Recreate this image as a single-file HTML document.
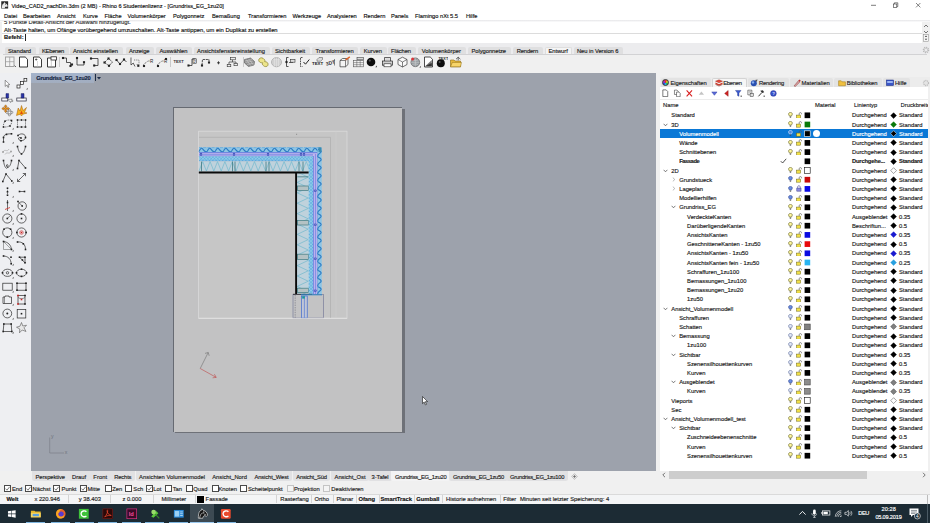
<!DOCTYPE html>
<html><head><meta charset="utf-8"><title>Rhino 6</title>
<style>
html,body{margin:0;padding:0;width:930px;height:523px;overflow:hidden;background:#f0f0f0;font-family:"Liberation Sans", sans-serif;}
#root{position:relative;width:930px;height:523px;overflow:hidden;}
#root div{position:absolute;box-sizing:border-box;}
.t{white-space:nowrap;-webkit-text-stroke:0.15px;}
</style></head><body><div id="root">
<div style="left:0px;top:0px;width:930px;height:523px;background:#f0f0f0;"></div>
<div style="left:0px;top:0px;width:930px;height:11.5px;background:#ffffff;"></div>
<div class="t" style="left:11.5px;top:0.80px;line-height:10px;font-size:5.55px;color:#111;">Video_CAD2_nachDin.3dm (2 MB) - Rhino 6 Studentenlizenz - [Grundriss_EG_1zu20]</div>
<div style="left:0px;top:11.5px;width:930px;height:9px;background:#ffffff;"></div>
<div class="t" style="left:4px;top:11.00px;line-height:10px;font-size:5.7px;color:#111;">Datei</div>
<div class="t" style="left:23px;top:11.00px;line-height:10px;font-size:5.7px;color:#111;">Bearbeiten</div>
<div class="t" style="left:57px;top:11.00px;line-height:10px;font-size:5.7px;color:#111;">Ansicht</div>
<div class="t" style="left:83px;top:11.00px;line-height:10px;font-size:5.7px;color:#111;">Kurve</div>
<div class="t" style="left:104.5px;top:11.00px;line-height:10px;font-size:5.7px;color:#111;">Fläche</div>
<div class="t" style="left:127.5px;top:11.00px;line-height:10px;font-size:5.7px;color:#111;">Volumenkörper</div>
<div class="t" style="left:173px;top:11.00px;line-height:10px;font-size:5.7px;color:#111;">Polygonnetz</div>
<div class="t" style="left:212px;top:11.00px;line-height:10px;font-size:5.7px;color:#111;">Bemaßung</div>
<div class="t" style="left:248px;top:11.00px;line-height:10px;font-size:5.7px;color:#111;">Transformieren</div>
<div class="t" style="left:292.5px;top:11.00px;line-height:10px;font-size:5.7px;color:#111;">Werkzeuge</div>
<div class="t" style="left:327px;top:11.00px;line-height:10px;font-size:5.7px;color:#111;">Analysieren</div>
<div class="t" style="left:363.5px;top:11.00px;line-height:10px;font-size:5.7px;color:#111;">Rendern</div>
<div class="t" style="left:391px;top:11.00px;line-height:10px;font-size:5.7px;color:#111;">Panels</div>
<div class="t" style="left:415px;top:11.00px;line-height:10px;font-size:5.7px;color:#111;">Flamingo nXt 5.5</div>
<div class="t" style="left:466px;top:11.00px;line-height:10px;font-size:5.7px;color:#111;">Hilfe</div>
<div style="left:0px;top:20.5px;width:930px;height:22px;background:#f0f0f0;"></div>
<div style="left:2px;top:20.8px;width:920px;height:22.1px;background:#ffffff;"></div>
<div style="left:0px;top:20.2px;width:930px;height:2.2px;background:linear-gradient(#e6e6e8,#fdfdfd);"></div>
<div class="t" style="left:4px;top:25.30px;line-height:10px;font-size:5.8px;color:#111;">Alt-Taste halten, um Ofänge vorübergehend umzuschalten. Alt-Taste antippen, um ein Duplikat zu erstellen</div>
<div class="t" style="left:4px;top:32.30px;line-height:10px;font-size:5.8px;color:#111;font-weight:bold;">Befehl:</div>
<div style="left:25.4px;top:34px;width:0.6px;height:6.6px;background:#222;"></div>
<div style="left:2px;top:21px;width:914px;height:5px;overflow:hidden;"><div class="t" style="left:2px;top:-3.6px;line-height:10px;font-size:5.8px;color:#333;">5 Punkte Detail-Ansicht der Auswahl hinzugefügt.</div></div>
<div style="left:2px;top:33px;width:920px;height:0.5px;background:#dcdcdc;"></div>
<svg style="position:absolute;left:1.2px;top:1.4px" width="7.4" height="7.8" viewBox="0 0 9 9.5"><rect x="0.3" y="0.3" width="8.4" height="8.9" fill="#2a2a2a"/><path d="M1 8.8C1 5 2 3 3.6 2.6L4 1L5 2.6C6.8 3 8 4.4 8.2 6.4L7.2 7.4L6.2 6.6C5.2 6.8 4.6 7.6 4.6 8.8Z" fill="#e8e8e8"/><circle cx="5.4" cy="4" r="0.5" fill="#111"/></svg>
<svg style="position:absolute;left:866px;top:1px" width="60" height="9" viewBox="0 0 60 9"><path d="M5 4.3H10" stroke="#444" stroke-width="0.7"/><rect x="27.4" y="3" width="3.4" height="3.6" fill="#fff" stroke="#333" stroke-width="0.6"/><path d="M28.4 3V1.8H31.8V5.6H30.8" fill="none" stroke="#333" stroke-width="0.6"/><path d="M50 2L54.4 6.4M54.4 2L50 6.4" stroke="#333" stroke-width="0.6"/></svg>
<div style="left:0px;top:42.9px;width:930px;height:11px;background:#ececee;"></div>
<div style="left:3px;top:53.7px;width:924px;height:0.6px;background:#d2d2d4;"></div>
<div style="left:4.6px;top:46.6px;width:31px;height:7.2px;background:#dfdfe0;border-radius:2px 2px 0 0;"></div>
<div class="t" style="left:8px;top:45.70px;line-height:10px;font-size:5.8px;color:#222;letter-spacing:-0.068px;">Standard</div>
<div style="left:38.6px;top:46.6px;width:30px;height:7.2px;background:#dfdfe0;border-radius:2px 2px 0 0;"></div>
<div class="t" style="left:42px;top:45.70px;line-height:10px;font-size:5.8px;color:#222;letter-spacing:-0.267px;">KEbenen</div>
<div style="left:69.6px;top:46.6px;width:53px;height:7.2px;background:#dfdfe0;border-radius:2px 2px 0 0;"></div>
<div class="t" style="left:73px;top:45.70px;line-height:10px;font-size:5.8px;color:#222;letter-spacing:-0.008px;">Ansicht einstellen</div>
<div style="left:125.6px;top:46.6px;width:28.5px;height:7.2px;background:#dfdfe0;border-radius:2px 2px 0 0;"></div>
<div class="t" style="left:129px;top:45.70px;line-height:10px;font-size:5.8px;color:#222;letter-spacing:-0.066px;">Anzeige</div>
<div style="left:156.1px;top:46.6px;width:36.0px;height:7.2px;background:#dfdfe0;border-radius:2px 2px 0 0;"></div>
<div class="t" style="left:159.5px;top:45.70px;line-height:10px;font-size:5.8px;color:#222;letter-spacing:-0.042px;">Auswählen</div>
<div style="left:193.6px;top:46.6px;width:76px;height:7.2px;background:#dfdfe0;border-radius:2px 2px 0 0;"></div>
<div class="t" style="left:197px;top:45.70px;line-height:10px;font-size:5.8px;color:#222;letter-spacing:0.024px;">Ansichtsfenstereinstellung</div>
<div style="left:271.6px;top:46.6px;width:38px;height:7.2px;background:#dfdfe0;border-radius:2px 2px 0 0;"></div>
<div class="t" style="left:275px;top:45.70px;line-height:10px;font-size:5.8px;color:#222;letter-spacing:-0.025px;">Sichtbarkeit</div>
<div style="left:312.1px;top:46.6px;width:46.19999999999999px;height:7.2px;background:#dfdfe0;border-radius:2px 2px 0 0;"></div>
<div class="t" style="left:315.5px;top:45.70px;line-height:10px;font-size:5.8px;color:#222;letter-spacing:-0.065px;">Transformieren</div>
<div style="left:360.3px;top:46.6px;width:26.30000000000001px;height:7.2px;background:#dfdfe0;border-radius:2px 2px 0 0;"></div>
<div class="t" style="left:363.7px;top:45.70px;line-height:10px;font-size:5.8px;color:#222;letter-spacing:-0.013px;">Kurven</div>
<div style="left:387.6px;top:46.6px;width:28px;height:7.2px;background:#dfdfe0;border-radius:2px 2px 0 0;"></div>
<div class="t" style="left:391px;top:45.70px;line-height:10px;font-size:5.8px;color:#222;letter-spacing:-0.091px;">Flächen</div>
<div style="left:418.3px;top:46.6px;width:47.30000000000001px;height:7.2px;background:#dfdfe0;border-radius:2px 2px 0 0;"></div>
<div class="t" style="left:421.7px;top:45.70px;line-height:10px;font-size:5.8px;color:#222;letter-spacing:0.022px;">Volumenkörper</div>
<div style="left:468.1px;top:46.6px;width:42.5px;height:7.2px;background:#dfdfe0;border-radius:2px 2px 0 0;"></div>
<div class="t" style="left:471.5px;top:45.70px;line-height:10px;font-size:5.8px;color:#222;letter-spacing:-0.054px;">Polygonnetze</div>
<div style="left:513.3000000000001px;top:46.6px;width:29.299999999999955px;height:7.2px;background:#dfdfe0;border-radius:2px 2px 0 0;"></div>
<div class="t" style="left:516.7px;top:45.70px;line-height:10px;font-size:5.8px;color:#222;letter-spacing:-0.136px;">Rendern</div>
<div style="left:545.1px;top:46.6px;width:27.200000000000045px;height:7.2px;background:#f4f4f4;border-radius:2px 2px 0 0;border:0.5px solid #dedede;border-bottom:none;"></div>
<div class="t" style="left:548.5px;top:45.70px;line-height:10px;font-size:5.8px;color:#222;letter-spacing:-0.066px;">Entwurf</div>
<div style="left:573.6px;top:46.6px;width:49.5px;height:7.2px;background:#dfdfe0;border-radius:2px 2px 0 0;"></div>
<div class="t" style="left:577px;top:45.70px;line-height:10px;font-size:5.8px;color:#222;letter-spacing:-0.066px;">Neu in Version 6</div>
<svg style="position:absolute;left:921.5px;top:45.6px" width="8" height="8" viewBox="0 0 8 8"><circle cx="4" cy="4" r="2.6" fill="none" stroke="#b8b8b8" stroke-width="1.3" stroke-dasharray="1.2 0.8"/><circle cx="4" cy="4" r="1.8" fill="none" stroke="#c4c4c4" stroke-width="0.8"/></svg>
<svg style="position:absolute;left:919.5px;top:21.5px" width="12" height="21" viewBox="0 0 12 21"><path d="M4 5 L6 3 L8 5 M4 9 L6 11 L8 9" fill="none" stroke="#555" stroke-width="0.8"/><rect x="3.6" y="12.4" width="4.8" height="7" fill="#f6f6f6" stroke="#888" stroke-width="0.5"/><path d="M4.8 15 L6 13.6 L7.2 15 Z M4.8 16.8 L6 18.2 L7.2 16.8 Z" fill="#444"/></svg>
<svg style="position:absolute;left:3.50px;top:55.50px" width="13" height="12" viewBox="0 0 13 12"><rect x="1.5" y="1" width="8.5" height="9.5" fill="#f4f4f4" stroke="#9a9a9a" stroke-width="0.9"/><path d="M5.7 1V10.5M1.5 5.7H10" stroke="#9a9a9a" stroke-width="0.7"/><path d="M10.5 9.5l1.5 1.5" stroke="#444" stroke-width="0.8"/></svg>
<svg style="position:absolute;left:16.50px;top:55.50px" width="13" height="12" viewBox="0 0 13 12"><path d="M2.5 1H8.2L10.5 3.3V11H2.5Z" fill="#fff" stroke="#222" stroke-width="0.9"/></svg>
<svg style="position:absolute;left:30.50px;top:55.50px" width="13" height="12" viewBox="0 0 13 12"><path d="M2.5 1H8.2L10.5 3.3V11H2.5Z" fill="#fff" stroke="#222" stroke-width="0.9"/><path d="M4 3.5H6.4M5.2 2.3V4.7" stroke="#222" stroke-width="0.6"/><path d="M6.5 5V11" stroke="#bbb" stroke-width="0.5"/></svg>
<svg style="position:absolute;left:44.50px;top:55.50px" width="13" height="12" viewBox="0 0 13 12"><path d="M2.5 2H10.5V11H2.5Z" fill="#fff" stroke="#222" stroke-width="0.9"/><rect x="6" y="0.8" width="5.5" height="3.2" fill="#fff" stroke="#222" stroke-width="0.8"/><path d="M6.3 4V11" stroke="#999" stroke-width="0.5"/></svg>
<svg style="position:absolute;left:61.00px;top:55.50px" width="13" height="12" viewBox="0 0 13 12"><path d="M2 2H5.5V6.5H9.5V10" fill="none" stroke="#222" stroke-width="0.75"/><rect x="0.95" y="0.95" width="2.1" height="2.1" fill="#222"/><rect x="8.45" y="8.95" width="2.1" height="2.1" fill="#222"/><rect x="9.95" y="7.45" width="2.1" height="2.1" fill="#222"/></svg>
<svg style="position:absolute;left:74.00px;top:55.50px" width="13" height="12" viewBox="0 0 13 12"><path d="M3 2V9H10V6.5" fill="none" stroke="#222" stroke-width="0.75"/><rect x="1.95" y="0.95" width="2.1" height="2.1" fill="#222"/><rect x="8.95" y="5.15" width="2.1" height="2.1" fill="#222"/></svg>
<svg style="position:absolute;left:87.50px;top:55.50px" width="13" height="12" viewBox="0 0 13 12"><path d="M3 2.5H10V9.5H6.5" fill="none" stroke="#222" stroke-width="0.75"/><rect x="1.95" y="1.45" width="2.1" height="2.1" fill="#222"/><rect x="5.15" y="8.45" width="2.1" height="2.1" fill="#222"/></svg>
<svg style="position:absolute;left:101.50px;top:55.50px" width="13" height="12" viewBox="0 0 13 12"><path d="M2.5 6.5L6.5 2.5L10.5 6L7 9.8Z" fill="none" stroke="#222" stroke-width="0.75" stroke-dasharray="2.4 0.8"/><rect x="1.45" y="5.45" width="2.1" height="2.1" fill="#222"/><rect x="5.45" y="1.45" width="2.1" height="2.1" fill="#222"/><rect x="5.95" y="8.75" width="2.1" height="2.1" fill="#222"/></svg>
<svg style="position:absolute;left:114.50px;top:55.50px" width="13" height="12" viewBox="0 0 13 12"><path d="M1.5 4L5 8L9 3.5L11.5 6" fill="none" stroke="#222" stroke-width="0.75"/><rect x="0.44999999999999996" y="2.95" width="2.1" height="2.1" fill="#222"/><rect x="3.95" y="6.95" width="2.1" height="2.1" fill="#222"/><rect x="7.95" y="2.45" width="2.1" height="2.1" fill="#222"/></svg>
<svg style="position:absolute;left:128.00px;top:55.50px" width="13" height="12" viewBox="0 0 13 12"><path d="M3 1.5V9L5.2 7L7 10.5" fill="#fff" stroke="#222" stroke-width="0.7"/><path d="M6 4H11V8.5H8.5" fill="none" stroke="#555" stroke-width="0.7" stroke-dasharray="1 0.8"/><rect x="9.25" y="8.75" width="2.1" height="2.1" fill="#222"/></svg>
<svg style="position:absolute;left:141.50px;top:55.50px" width="13" height="12" viewBox="0 0 13 12"><path d="M1.5 8.5L6 5H8" fill="none" stroke="#333" stroke-width="0.7" stroke-dasharray="1.2 0.8"/><text x="8" y="7" font-size="4.5" font-family="Liberation Sans,sans-serif" fill="#222">R</text><rect x="0.95" y="8.95" width="2.1" height="2.1" fill="#222"/></svg>
<svg style="position:absolute;left:155.50px;top:55.50px" width="13" height="12" viewBox="0 0 13 12"><path d="M1.5 8.5L6 5H8" fill="none" stroke="#333" stroke-width="0.7" stroke-dasharray="1.2 0.8"/><text x="8" y="7" font-size="4.5" font-family="Liberation Sans,sans-serif" fill="#222">R</text><rect x="0.95" y="8.95" width="2.1" height="2.1" fill="#222"/><rect x="8.95" y="1.95" width="2.1" height="2.1" fill="#222"/></svg>
<svg style="position:absolute;left:171.50px;top:55.50px" width="13" height="12" viewBox="0 0 13 12"><text x="1.5" y="7.2" font-size="4" font-weight="bold" font-family="Liberation Sans,sans-serif" fill="#333">TEXT</text></svg>
<svg style="position:absolute;left:185.50px;top:55.50px" width="13" height="12" viewBox="0 0 13 12"><path d="M3 9.5H6V3H9.5" fill="none" stroke="#222" stroke-width="0.75"/><text x="7.6" y="6.8" font-size="4.2" font-family="Liberation Sans,sans-serif" fill="#222">2</text><rect x="7" y="2.8" width="3.6" height="4.6" fill="none" stroke="#222" stroke-width="0.5"/><rect x="1.45" y="8.45" width="2.1" height="2.1" fill="#222"/></svg>
<svg style="position:absolute;left:198.50px;top:55.50px" width="13" height="12" viewBox="0 0 13 12"><path d="M3 9L3.5 3.5H10V6" fill="none" stroke="#222" stroke-width="0.75" stroke-dasharray="2.2 0.7"/><rect x="1.95" y="8.45" width="2.1" height="2.1" fill="#222"/><rect x="8.95" y="5.45" width="2.1" height="2.1" fill="#222"/></svg>
<svg style="position:absolute;left:211.50px;top:55.50px" width="13" height="12" viewBox="0 0 13 12"><path d="M5 6.8H8M6.5 5.3V8.3" stroke="#222" stroke-width="0.8"/></svg>
<svg style="position:absolute;left:225.50px;top:55.50px" width="13" height="12" viewBox="0 0 13 12"><path d="M6.5 3.5V6H3V9M6.5 6H10V8" fill="none" stroke="#333" stroke-width="0.7"/><rect x="4.5" y="1.5" width="5" height="2.3" fill="#eee" stroke="#333" stroke-width="0.6"/><rect x="1.2" y="8.5" width="3.6" height="2.2" fill="#eee" stroke="#333" stroke-width="0.6"/><rect x="8" y="7.5" width="3.6" height="2.2" fill="#eee" stroke="#333" stroke-width="0.6"/></svg>
<svg style="position:absolute;left:242.50px;top:55.50px" width="13" height="12" viewBox="0 0 13 12"><path d="M1.5 3.5L7.5 2L11.5 5.5L11 9L5.5 10.5L1.5 7Z" fill="#8e8e8e" stroke="#555" stroke-width="0.6"/><path d="M2 5L9 3.5M2.5 6.5L10 5M4 8.5L11 7M3 3.3L8 9.8M5.5 2.7L10.5 9" stroke="#d5d5d5" stroke-width="0.5"/></svg>
<svg style="position:absolute;left:256.50px;top:55.50px" width="13" height="12" viewBox="0 0 13 12"><path d="M2 3C3.5 1.2 6 1.6 6.8 3.2C8 3.4 8.2 5 7.6 5.6C10 5.6 11.6 7.2 11 9.2C10.4 11 7.4 11 6.4 9.6C5.2 9 5.2 7.4 5.8 6.8C3.4 7.2 0.8 5.4 2 3Z" fill="#ece48a" stroke="#8a8332" stroke-width="0.7"/></svg>
<svg style="position:absolute;left:269.50px;top:55.50px" width="13" height="12" viewBox="0 0 13 12"><ellipse cx="6.5" cy="6.2" rx="5" ry="4.6" fill="#c9c9c9" stroke="#9a9a9a" stroke-width="0.6"/><path d="M2 5H11M2 7H11M3 9H10M3 3.4H10M4.5 2V10.5M6.5 1.6V10.8M8.5 2V10.5" stroke="#eee" stroke-width="0.45"/></svg>
<svg style="position:absolute;left:283.50px;top:55.50px" width="13" height="12" viewBox="0 0 13 12"><path d="M4.5 1.5H2.5V10.5H4.5" fill="none" stroke="#222" stroke-width="0.75"/><path d="M5 6.5H9" stroke="#222" stroke-width="0.7"/><rect x="6.5" y="3.5" width="4.5" height="2.7" fill="#ddd" stroke="#333" stroke-width="0.6"/><rect x="1.45" y="4.95" width="2.1" height="2.1" fill="#222"/></svg>
<svg style="position:absolute;left:297.50px;top:55.50px" width="13" height="12" viewBox="0 0 13 12"><path d="M4.5 1.5H2.5V10.5H4.5" fill="none" stroke="#222" stroke-width="0.75" stroke-dasharray="1.8 0.7"/><path d="M5.5 6L7.5 8.2L11.3 3.5" fill="none" stroke="#222" stroke-width="1"/></svg>
<svg style="position:absolute;left:311.00px;top:55.50px" width="13" height="12" viewBox="0 0 13 12"><text x="1" y="9" font-size="4.4" font-weight="bold" font-family="Liberation Sans,sans-serif" fill="#222">TEXT</text><path d="M6 3.5L8 1.5H11.5V3.5L9.5 5.2H6Z" fill="#ddd" stroke="#444" stroke-width="0.5"/></svg>
<svg style="position:absolute;left:324.50px;top:55.50px" width="13" height="12" viewBox="0 0 13 12"><text x="0.5" y="8.6" font-size="5" font-weight="bold" font-family="Liberation Sans,sans-serif" fill="#333" transform="rotate(-12 6 6)">3DT</text><path d="M9.5 3V9.5" stroke="#444" stroke-width="0.6"/></svg>
<svg style="position:absolute;left:337.50px;top:55.50px" width="13" height="12" viewBox="0 0 13 12"><path d="M2 4.5L4.5 2.5H10V8.5L7.5 10.8H2Z" fill="#f4f4f4" stroke="#333" stroke-width="0.7"/><path d="M2 4.5H7.5V10.8M7.5 4.5L10 2.5" fill="none" stroke="#333" stroke-width="0.6"/><path d="M7.5 4L11.8 0.8" stroke="#e0622a" stroke-width="1.5"/></svg>
<svg style="position:absolute;left:351.50px;top:55.50px" width="13" height="12" viewBox="0 0 13 12"><rect x="1.5" y="4.5" width="10" height="6.3" fill="#f4f4f4" stroke="#555" stroke-width="0.6"/><path d="M1.5 6.6H11.5M1.5 8.7H11.5M4.8 4.5V10.8M8.2 4.5V10.8" stroke="#555" stroke-width="0.5"/><rect x="5" y="1.6" width="6.5" height="2.2" fill="#d9d9d9" stroke="#444" stroke-width="0.6"/></svg>
<svg style="position:absolute;left:364.50px;top:55.50px" width="13" height="12" viewBox="0 0 13 12"><circle cx="6" cy="6" r="4.3" fill="#0c0c0c"/><circle cx="4.8" cy="4.6" r="1.1" fill="#555"/><path d="M10.3 11.2l1.6 0l0 -1.6z" fill="#333"/></svg>
<svg style="position:absolute;left:381.00px;top:55.50px" width="13" height="12" viewBox="0 0 13 12"><path d="M3.5 5V1.5H9.5V5" fill="#fff" stroke="#222" stroke-width="0.7"/><rect x="1.5" y="5" width="10" height="4.2" fill="#d0d0d0" stroke="#222" stroke-width="0.7"/><rect x="3" y="7.8" width="7" height="3" fill="#fff" stroke="#222" stroke-width="0.6"/><path d="M4.2 2.8H8.8M4.2 3.9H8.8" stroke="#888" stroke-width="0.4"/></svg>
<svg style="position:absolute;left:395.50px;top:55.50px" width="13" height="12" viewBox="0 0 13 12"><path d="M6.5 1.2L11 3.5V8.5L6.5 11L2 8.5V3.5Z" fill="#fafafa" stroke="#333" stroke-width="0.7"/><path d="M2 3.5L6.5 6L11 3.5M6.5 6V11" fill="none" stroke="#333" stroke-width="0.6"/></svg>
<svg style="position:absolute;left:408.50px;top:55.50px" width="13" height="12" viewBox="0 0 13 12"><circle cx="6.3" cy="6.3" r="4.4" fill="#9aa0a4" stroke="#555" stroke-width="0.6"/><path d="M2 6.3H10.6M6.3 2V10.6M3.2 3.6C5 5 7.6 5 9.4 3.6M3.2 9C5 7.6 7.6 7.6 9.4 9" fill="none" stroke="#ddd" stroke-width="0.4"/><circle cx="3.6" cy="3" r="1.5" fill="#d8363a"/><path d="M10.3 11.5l1.6 0l0 -1.6z" fill="#333"/></svg>
<svg style="position:absolute;left:421.50px;top:55.50px" width="13" height="12" viewBox="0 0 13 12"><path d="M2.5 1H8.2L10.5 3.3V11H2.5Z" fill="#fff" stroke="#222" stroke-width="0.8"/><path d="M3.2 10.3L9.8 4V10.3Z" fill="#777"/><path d="M3.2 10.3L9.8 10.3L9.8 7Z" fill="#333"/></svg>
<svg style="position:absolute;left:434.50px;top:55.50px" width="13" height="12" viewBox="0 0 13 12"><circle cx="5.8" cy="7.2" r="4" fill="#0c0c0c"/><circle cx="4.6" cy="6" r="1" fill="#555"/><text x="3.5" y="3.8" font-size="3.8" font-weight="bold" font-family="Liberation Sans,sans-serif" fill="#333">TEXT</text></svg>
<svg style="position:absolute;left:448.50px;top:55.50px" width="13" height="12" viewBox="0 0 13 12"><path d="M1.5 4H5L6 5H11.5V10.8H1.5Z" fill="#e7b93c" stroke="#8a6a14" stroke-width="0.6"/><path d="M1.5 10.8L3.3 6.4H12.5L11.5 10.8Z" fill="#f7d56a" stroke="#8a6a14" stroke-width="0.5"/><path d="M7 3.2L9.2 1.2L11.4 3.2M9.2 1.2V4.4" fill="none" stroke="#333" stroke-width="0.7"/></svg>
<div style="left:59.25px;top:56.5px;width:0.6px;height:10.5px;background:#c9c9c9;"></div>
<div style="left:170.25px;top:56.5px;width:0.6px;height:10.5px;background:#c9c9c9;"></div>
<div style="left:242.75px;top:56.5px;width:0.6px;height:10.5px;background:#c9c9c9;"></div>
<div style="left:0px;top:73px;width:31px;height:398px;background:#eeeff2;"></div>
<svg style="position:absolute;left:0.90px;top:76.50px" width="13" height="13" viewBox="0 0 13 13"><path d="M4.2 3.2V9.4L5.8 8.1L6.9 10.5L7.9 10L6.8 7.8L8.8 7.6Z" fill="#fff" stroke="#555" stroke-width="0.6"/></svg>
<svg style="position:absolute;left:14.70px;top:76.50px" width="13" height="13" viewBox="0 0 13 13"><path d="M3.5 9.5L7 6L10.5 2.8" stroke="#555" stroke-width="0.6"/><rect x="2" y="8" width="3" height="3" fill="#fff" stroke="#222" stroke-width="0.7"/><rect x="5.6" y="4.6" width="2.8" height="2.8" fill="#fff" stroke="#222" stroke-width="0.7"/><rect x="9" y="1.4" width="2.8" height="2.8" fill="#fff" stroke="#222" stroke-width="0.7"/><path d="M11 12.6l1.8 0l0 -1.8z" fill="#666"/></svg>
<svg style="position:absolute;left:0.90px;top:90.06px" width="13" height="13" viewBox="0 0 13 13"><rect x="0.8" y="8" width="6" height="3" fill="#fbfbfd" stroke="#223" stroke-width="0.7"/><path d="M5 8V3.6H7.6V8Z" fill="#2a34a8" stroke="#141a5a" stroke-width="0.5"/><path d="M7.6 9V13L8.8 12L9.8 13.6L10.6 13.1L9.7 11.6L11 11.4Z" fill="#fff" stroke="#555" stroke-width="0.5" transform="rotate(-40 8 10)"/></svg>
<svg style="position:absolute;left:14.70px;top:90.06px" width="13" height="13" viewBox="0 0 13 13"><rect x="1.8" y="8" width="9.4" height="3" fill="#fbfbfd" stroke="#223" stroke-width="0.7"/><path d="M6.2 8V3.6H9V8Z" fill="#2a34a8" stroke="#141a5a" stroke-width="0.5"/></svg>
<svg style="position:absolute;left:0.90px;top:103.62px" width="13" height="13" viewBox="0 0 13 13"><path d="M4 0L5.4 1.7H4.6V3.4H6.3V2.6L8 4L6.3 5.4V4.6H4.6V6.3H5.4L4 8L2.6 6.3H3.4V4.6H1.7V5.4L0 4L1.7 2.6V3.4H3.4V1.7H2.6Z" transform="translate(4.6 4.6) scale(0.95)" fill="#fff" stroke="#444" stroke-width="0.55"/><path d="M4 0L5.4 1.7H4.6V3.4H6.3V2.6L8 4L6.3 5.4V4.6H4.6V6.3H5.4L4 8L2.6 6.3H3.4V4.6H1.7V5.4L0 4L1.7 2.6V3.4H3.4V1.7H2.6Z" transform="translate(0.8 0.8) scale(0.95)" fill="#f29a1f" stroke="#8a4a08" stroke-width="0.5"/></svg>
<svg style="position:absolute;left:14.70px;top:103.62px" width="13" height="13" viewBox="0 0 13 13"><path d="M1.5 11.5L3.2 4L5 7L6.5 1.5L8 6.5L11.5 3.5L9.4 8.4L12 9L8 10.2L6.5 12L5 10.2Z" fill="#f6b21c" stroke="#a15a06" stroke-width="0.5"/><path d="M5 10L6.5 6.5L8 10Z" fill="#e04a10"/></svg>
<svg style="position:absolute;left:0.90px;top:117.18px" width="13" height="13" viewBox="0 0 13 13"><path d="M2.5 10C2 4 6 2 10.5 3.5C11.5 6.5 9 10.5 2.5 10Z" fill="none" stroke="#2a2a2a" stroke-width="0.7" stroke-dasharray="1 0.9"/><rect x="1.7" y="9.2" width="1.6" height="1.6" fill="#222"/><rect x="9.7" y="2.7" width="1.6" height="1.6" fill="#222"/><rect x="3.2" y="3.4000000000000004" width="1.6" height="1.6" fill="#222"/><rect x="8.2" y="8.2" width="1.6" height="1.6" fill="#222"/><path d="M11 12.6l1.8 0l0 -1.8z" fill="#666"/></svg>
<svg style="position:absolute;left:14.70px;top:117.18px" width="13" height="13" viewBox="0 0 13 13"><rect x="2.5" y="3" width="8" height="7" fill="none" stroke="#2a2a2a" stroke-width="0.7" stroke-dasharray="1 0.9"/><rect x="1.7" y="2.2" width="1.6" height="1.6" fill="#222"/><rect x="9.7" y="2.2" width="1.6" height="1.6" fill="#222"/><rect x="1.7" y="9.2" width="1.6" height="1.6" fill="#222"/><rect x="9.7" y="9.2" width="1.6" height="1.6" fill="#222"/><rect x="5.7" y="2.2" width="1.6" height="1.6" fill="#222"/><rect x="5.7" y="9.2" width="1.6" height="1.6" fill="#222"/></svg>
<svg style="position:absolute;left:0.90px;top:130.74px" width="13" height="13" viewBox="0 0 13 13"><path d="M2.5 11V7C2.5 4 4.5 2.8 10.5 2.8" fill="none" stroke="#2a2a2a" stroke-width="0.7"/><rect x="1.7" y="10.2" width="1.6" height="1.6" fill="#222"/><rect x="1.7" y="5.7" width="1.6" height="1.6" fill="#222"/><rect x="4.7" y="2.5999999999999996" width="1.6" height="1.6" fill="#222"/><rect x="9.7" y="1.9999999999999998" width="1.6" height="1.6" fill="#222"/><path d="M11 12.6l1.8 0l0 -1.8z" fill="#666"/></svg>
<svg style="position:absolute;left:14.70px;top:130.74px" width="13" height="13" viewBox="0 0 13 13"><path d="M3 4.5C6 1.5 11 3 10.5 6.5C10 10 4.5 10.5 3.5 8C3 6.6 5 6 6 7" fill="none" stroke="#2a2a2a" stroke-width="0.7"/><rect x="2.2" y="3.7" width="1.6" height="1.6" fill="#222"/><rect x="9.7" y="5.7" width="1.6" height="1.6" fill="#222"/><rect x="5.2" y="9.0" width="1.6" height="1.6" fill="#222"/><rect x="5.2" y="6.2" width="1.6" height="1.6" fill="#222"/></svg>
<svg style="position:absolute;left:0.90px;top:144.30px" width="13" height="13" viewBox="0 0 13 13"><path d="M2 8C4 4 6 9 8 5M4 10.5C6 7 8 11 10 7.5" fill="none" stroke="#aaa" stroke-width="0.7"/><rect x="1.2" y="7.2" width="1.6" height="1.6" fill="#999"/><rect x="9.2" y="6.7" width="1.6" height="1.6" fill="#999"/><path d="M11 12.6l1.8 0l0 -1.8z" fill="#666"/></svg>
<svg style="position:absolute;left:14.70px;top:144.30px" width="13" height="13" viewBox="0 0 13 13"><path d="M2.5 2.5C4.5 12 8.5 12 10.5 2.5" fill="none" stroke="#2a2a2a" stroke-width="0.7"/><rect x="1.7" y="1.7" width="1.6" height="1.6" fill="#222"/><rect x="9.7" y="1.7" width="1.6" height="1.6" fill="#222"/><rect x="5.7" y="9.2" width="1.6" height="1.6" fill="#222"/></svg>
<svg style="position:absolute;left:0.90px;top:157.86px" width="13" height="13" viewBox="0 0 13 13"><path d="M2.5 2.5C3.5 11 6.5 12 7 8C7.2 6 5 6 5.5 8C6.5 11 9.5 9 10.5 2.5" fill="none" stroke="#2a2a2a" stroke-width="0.7"/><rect x="1.7" y="1.7" width="1.6" height="1.6" fill="#222"/><rect x="9.7" y="1.7" width="1.6" height="1.6" fill="#222"/><path d="M11 12.6l1.8 0l0 -1.8z" fill="#666"/></svg>
<svg style="position:absolute;left:14.70px;top:157.86px" width="13" height="13" viewBox="0 0 13 13"><path d="M4 2.5L2.5 10.5M4 2.5L10.5 10" fill="none" stroke="#2a2a2a" stroke-width="0.7"/><rect x="3.2" y="1.7" width="1.6" height="1.6" fill="#222"/><rect x="1.7" y="9.7" width="1.6" height="1.6" fill="#222"/><rect x="9.7" y="9.2" width="1.6" height="1.6" fill="#222"/></svg>
<svg style="position:absolute;left:0.90px;top:171.42px" width="13" height="13" viewBox="0 0 13 13"><path d="M1.8 10.5L5 3L10.8 10" fill="none" stroke="#2a2a2a" stroke-width="0.7"/><rect x="1.0" y="9.7" width="1.6" height="1.6" fill="#222"/><rect x="4.2" y="2.2" width="1.6" height="1.6" fill="#222"/><rect x="10.0" y="9.2" width="1.6" height="1.6" fill="#222"/><path d="M11 12.6l1.8 0l0 -1.8z" fill="#666"/></svg>
<svg style="position:absolute;left:14.70px;top:171.42px" width="13" height="13" viewBox="0 0 13 13"><path d="M2.5 10.5L10.5 2.5" fill="none" stroke="#2a2a2a" stroke-width="0.7"/><path d="M2.5 7.8V10.5H5.2M7.8 2.5H10.5V5.2" fill="none" stroke="#2a2a2a" stroke-width="0.7"/></svg>
<svg style="position:absolute;left:0.90px;top:184.98px" width="13" height="13" viewBox="0 0 13 13"><path d="M6.5 3V10.5" fill="none" stroke="#333" stroke-width="0.7" stroke-dasharray="1.3 1"/><rect x="5.7" y="2.4000000000000004" width="1.6" height="1.6" fill="#222"/><rect x="5.7" y="6.0" width="1.6" height="1.6" fill="#222"/><rect x="5.7" y="9.399999999999999" width="1.6" height="1.6" fill="#222"/><path d="M11 12.6l1.8 0l0 -1.8z" fill="#666"/></svg>
<svg style="position:absolute;left:14.70px;top:184.98px" width="13" height="13" viewBox="0 0 13 13"><path d="M4.5 6.5H9.5" stroke="#333" stroke-width="0.7"/><rect x="3.7" y="5.7" width="1.6" height="1.6" fill="#222"/><rect x="8.7" y="5.7" width="1.6" height="1.6" fill="#222"/></svg>
<svg style="position:absolute;left:0.90px;top:198.54px" width="13" height="13" viewBox="0 0 13 13"><path d="M6.5 1V12" stroke="#333" stroke-width="0.7"/><path d="M4 10.5L9 8.5" stroke="#d0302a" stroke-width="0.8"/><rect x="5.7" y="2.7" width="1.6" height="1.6" fill="#222"/><path d="M11 12.6l1.8 0l0 -1.8z" fill="#666"/></svg>
<svg style="position:absolute;left:14.70px;top:198.54px" width="13" height="13" viewBox="0 0 13 13"><circle cx="7.2" cy="7" r="4.2" fill="none" stroke="#2a2a2a" stroke-width="0.7"/><path d="M3 2.5L7.2 7" stroke="#333" stroke-width="0.6"/><rect x="6.4" y="6.2" width="1.6" height="1.6" fill="#222"/><rect x="2.2" y="1.7" width="1.6" height="1.6" fill="#222"/></svg>
<svg style="position:absolute;left:0.90px;top:212.10px" width="13" height="13" viewBox="0 0 13 13"><circle cx="6.3" cy="6.5" r="4.6" fill="none" stroke="#2a2a2a" stroke-width="0.7"/><path d="M6.3 6.5L9.6 3.2" stroke="#333" stroke-width="0.6"/><rect x="5.5" y="5.7" width="1.6" height="1.6" fill="#222"/><path d="M11 12.6l1.8 0l0 -1.8z" fill="#666"/></svg>
<svg style="position:absolute;left:14.70px;top:212.10px" width="13" height="13" viewBox="0 0 13 13"><circle cx="6.5" cy="6.5" r="4.6" fill="none" stroke="#2a2a2a" stroke-width="0.7"/><rect x="5.7" y="5.7" width="1.6" height="1.6" fill="#222"/><rect x="5.7" y="1.0999999999999999" width="1.6" height="1.6" fill="#222"/></svg>
<svg style="position:absolute;left:0.90px;top:225.66px" width="13" height="13" viewBox="0 0 13 13"><circle cx="6.3" cy="6.5" r="4.6" fill="none" stroke="#2a2a2a" stroke-width="0.7"/><rect x="2.2" y="2.4000000000000004" width="1.6" height="1.6" fill="#222"/><rect x="8.799999999999999" y="2.4000000000000004" width="1.6" height="1.6" fill="#222"/><rect x="5.5" y="10.299999999999999" width="1.6" height="1.6" fill="#222"/><path d="M11 12.6l1.8 0l0 -1.8z" fill="#666"/></svg>
<svg style="position:absolute;left:14.70px;top:225.66px" width="13" height="13" viewBox="0 0 13 13"><circle cx="6.5" cy="6.5" r="4.6" fill="none" stroke="#2a2a2a" stroke-width="0.7"/><circle cx="6.5" cy="6.5" r="1.8" fill="none" stroke="#c33" stroke-width="0.6"/><rect x="1.0999999999999999" y="5.7" width="1.6" height="1.6" fill="#222"/><rect x="10.299999999999999" y="5.7" width="1.6" height="1.6" fill="#222"/><rect x="5.7" y="5.7" width="1.6" height="1.6" fill="#c22"/></svg>
<svg style="position:absolute;left:0.90px;top:239.22px" width="13" height="13" viewBox="0 0 13 13"><path d="M2.5 2.5L10.5 10.5H2.5Z" fill="none" stroke="#555" stroke-width="0.5"/><path d="M2.5 2.5C7 3 10 6 10.5 10.5" fill="none" stroke="#2a2a2a" stroke-width="0.7"/><rect x="1.7" y="1.7" width="1.6" height="1.6" fill="#222"/><rect x="9.7" y="9.7" width="1.6" height="1.6" fill="#222"/><path d="M11 12.6l1.8 0l0 -1.8z" fill="#666"/></svg>
<svg style="position:absolute;left:14.70px;top:239.22px" width="13" height="13" viewBox="0 0 13 13"><path d="M2.5 3C7.5 2.5 10.5 5.5 10.5 10.5" fill="none" stroke="#2a2a2a" stroke-width="0.7"/><rect x="1.7" y="2.2" width="1.6" height="1.6" fill="#222"/><rect x="9.7" y="9.7" width="1.6" height="1.6" fill="#222"/><rect x="7.500000000000001" y="4.0" width="1.6" height="1.6" fill="#222"/></svg>
<svg style="position:absolute;left:0.90px;top:252.78px" width="13" height="13" viewBox="0 0 13 13"><path d="M2.5 3C7 3.2 10 6 10.2 10.8" fill="none" stroke="#2a2a2a" stroke-width="0.7"/><rect x="1.7" y="2.2" width="1.6" height="1.6" fill="#222"/><rect x="9.2" y="3.4000000000000004" width="1.6" height="1.6" fill="#222"/><rect x="9.399999999999999" y="10.0" width="1.6" height="1.6" fill="#222"/><path d="M11 12.6l1.8 0l0 -1.8z" fill="#666"/></svg>
<svg style="position:absolute;left:14.70px;top:252.78px" width="13" height="13" viewBox="0 0 13 13"><path d="M4.5 4.2H10V9.8Z" fill="none" stroke="#2a2a2a" stroke-width="0.7"/><rect x="3.7" y="3.4000000000000004" width="1.6" height="1.6" fill="#222"/><rect x="9.2" y="3.4000000000000004" width="1.6" height="1.6" fill="#222"/><rect x="9.2" y="9.0" width="1.6" height="1.6" fill="#222"/><rect x="6.6000000000000005" y="6.2" width="1.6" height="1.6" fill="#222"/></svg>
<svg style="position:absolute;left:0.90px;top:266.34px" width="13" height="13" viewBox="0 0 13 13"><ellipse cx="6.5" cy="6.8" rx="5" ry="3.6" fill="none" stroke="#2a2a2a" stroke-width="0.7"/><circle cx="6.5" cy="6.8" r="1.2" fill="none" stroke="#2a2a2a" stroke-width="0.7"/><rect x="0.7" y="6.0" width="1.6" height="1.6" fill="#222"/><rect x="10.7" y="6.0" width="1.6" height="1.6" fill="#222"/><path d="M11 12.6l1.8 0l0 -1.8z" fill="#666"/></svg>
<svg style="position:absolute;left:14.70px;top:266.34px" width="13" height="13" viewBox="0 0 13 13"><ellipse cx="6.5" cy="6.8" rx="5" ry="3.6" fill="none" stroke="#2a2a2a" stroke-width="0.7"/><rect x="0.7" y="6.0" width="1.6" height="1.6" fill="#222"/><rect x="10.7" y="6.0" width="1.6" height="1.6" fill="#222"/><rect x="5.7" y="2.4000000000000004" width="1.6" height="1.6" fill="#222"/><rect x="5.7" y="9.6" width="1.6" height="1.6" fill="#222"/></svg>
<svg style="position:absolute;left:0.90px;top:279.90px" width="13" height="13" viewBox="0 0 13 13"><rect x="1.8" y="3.2" width="9.4" height="7" fill="none" stroke="#2a2a2a" stroke-width="0.7"/><path d="M11 12.6l1.8 0l0 -1.8z" fill="#666"/></svg>
<svg style="position:absolute;left:14.70px;top:279.90px" width="13" height="13" viewBox="0 0 13 13"><rect x="2" y="3.2" width="9" height="7" fill="none" stroke="#2a2a2a" stroke-width="0.7"/><rect x="1.2" y="2.4000000000000004" width="1.6" height="1.6" fill="#222"/><rect x="10.2" y="2.4000000000000004" width="1.6" height="1.6" fill="#222"/><rect x="1.2" y="9.399999999999999" width="1.6" height="1.6" fill="#222"/><rect x="10.2" y="9.399999999999999" width="1.6" height="1.6" fill="#222"/></svg>
<svg style="position:absolute;left:0.90px;top:293.46px" width="13" height="13" viewBox="0 0 13 13"><path d="M2 4H4V3H8V4H10.5V10.5H2Z" fill="none" stroke="#2a2a2a" stroke-width="0.7"/><path d="M3.5 4V10.5" stroke="#333" stroke-width="0.5"/><path d="M11 12.6l1.8 0l0 -1.8z" fill="#666"/></svg>
<svg style="position:absolute;left:14.70px;top:293.46px" width="13" height="13" viewBox="0 0 13 13"><rect x="3" y="2.5" width="7" height="8.5" fill="none" stroke="#2a2a2a" stroke-width="0.7"/><path d="M3 4.5C5 6 8 6 10 4.5" fill="none" stroke="#333" stroke-width="0.5"/><rect x="2.2" y="1.7" width="1.6" height="1.6" fill="#c22"/><rect x="9.2" y="1.7" width="1.6" height="1.6" fill="#222"/><rect x="2.2" y="10.2" width="1.6" height="1.6" fill="#c22"/><rect x="9.2" y="10.2" width="1.6" height="1.6" fill="#222"/><rect x="5.7" y="5.7" width="1.6" height="1.6" fill="#c22"/></svg>
<svg style="position:absolute;left:0.90px;top:307.02px" width="13" height="13" viewBox="0 0 13 13"><circle cx="6.3" cy="6.5" r="4.4" fill="none" stroke="#2a2a2a" stroke-width="0.7"/><circle cx="6.3" cy="6.5" r="1" fill="#222"/><path d="M11 12.6l1.8 0l0 -1.8z" fill="#666"/></svg>
<svg style="position:absolute;left:14.70px;top:307.02px" width="13" height="13" viewBox="0 0 13 13"><rect x="2.2" y="2.4" width="8.6" height="8.6" fill="none" stroke="#2a2a2a" stroke-width="0.7"/><rect x="5.7" y="5.9" width="1.6" height="1.6" fill="#222"/></svg>
<svg style="position:absolute;left:0.90px;top:320.58px" width="13" height="13" viewBox="0 0 13 13"><path d="M2.8 3H10.2L10.8 10.5H2.2Z" fill="none" stroke="#2a2a2a" stroke-width="0.7"/><rect x="1.9999999999999998" y="2.2" width="1.6" height="1.6" fill="#222"/><rect x="9.399999999999999" y="2.2" width="1.6" height="1.6" fill="#222"/><rect x="1.4000000000000001" y="9.7" width="1.6" height="1.6" fill="#222"/><rect x="10.0" y="9.7" width="1.6" height="1.6" fill="#222"/><path d="M11 12.6l1.8 0l0 -1.8z" fill="#666"/></svg>
<svg style="position:absolute;left:14.70px;top:320.58px" width="13" height="13" viewBox="0 0 13 13"><path d="M6.5 1.5L7.8 5L11.5 4.2L9 6.8L11 10.5L7.2 9L4.5 11.8L4.8 8L1.5 6.2L5 5.2Z" fill="#e8e8e8" stroke="#555" stroke-width="0.6"/></svg>
<div style="left:31px;top:73px;width:625px;height:397.5px;background:#9da2ac;"></div>
<div style="left:31px;top:73px;width:63px;height:9.5px;background:linear-gradient(#a5b4cc,#a2adbf);"></div>
<div class="t" style="left:36.3px;top:72.90px;line-height:10px;font-size:5.75px;color:#14233f;font-weight:bold;letter-spacing:-0.226px;">Grundriss_EG_1zu20</div>
<div style="left:95.2px;top:74.3px;width:0.6px;height:6.6px;background:#1c2c48;"></div>
<svg style="position:absolute;left:96.6px;top:76.6px" width="4" height="3" viewBox="0 0 4 3"><path d="M0 0H4L2 2.6Z" fill="#1c2c48"/></svg>
<div style="left:175px;top:108.8px;width:229.7px;height:324.3px;background:#6e7178;"></div>
<div style="left:173px;top:107px;width:229.2px;height:324.8px;background:#c2c2c3;border-left:1px solid #666a72;border-top:0.7px solid #666a72;"></div>
<svg style="position:absolute;left:170px;top:100px" width="240" height="340" viewBox="0 0 240 340"><rect x="28.599999999999994" y="31.19999999999999" width="148.4" height="187.10000000000002" fill="#c6c6c6" stroke="#dadada" stroke-width="0.8"/><path d="M29.0 37.3H160.5V218" fill="none" stroke="#aeaeae" stroke-width="0.7"/><path d="M166.0 31.5V218" fill="none" stroke="#cfcfcf" stroke-width="0.5"/><rect x="29" y="47.30000000000001" width="122" height="5" fill="#8ec5e4"/><path d="M29.0 51.6q2 -5.2 4 -2.2t4 2.2M37.1 51.6q2 -5.2 4 -2.2t4 2.2M45.2 51.6q2 -5.2 4 -2.2t4 2.2M53.3 51.6q2 -5.2 4 -2.2t4 2.2M61.4 51.6q2 -5.2 4 -2.2t4 2.2M69.5 51.6q2 -5.2 4 -2.2t4 2.2M77.6 51.6q2 -5.2 4 -2.2t4 2.2M85.7 51.6q2 -5.2 4 -2.2t4 2.2M93.8 51.6q2 -5.2 4 -2.2t4 2.2M101.9 51.6q2 -5.2 4 -2.2t4 2.2M110.0 51.6q2 -5.2 4 -2.2t4 2.2M118.1 51.6q2 -5.2 4 -2.2t4 2.2M126.2 51.6q2 -5.2 4 -2.2t4 2.2M134.3 51.6q2 -5.2 4 -2.2t4 2.2M142.4 51.6q2 -5.2 4 -2.2t4 2.2" fill="none" stroke="#2c7cc4" stroke-width="1.1"/><path d="M29.0 47.6H151" stroke="#5aa5dc" stroke-width="0.6" stroke-dasharray="3 1.2"/><rect x="29" y="52.30000000000001" width="118.5" height="4" fill="#cbbdf0"/><path d="M29.0 52.5H147.5M29.0 54.2H146M29.0 56.0H144" stroke="#3d62d8" stroke-width="0.6" fill="none"/><rect x="30.2" y="53.19999999999999" width="1.6" height="2.2" fill="none" stroke="#2038a8" stroke-width="0.5"/><rect x="63.2" y="53.19999999999999" width="1.6" height="2.2" fill="none" stroke="#2038a8" stroke-width="0.5"/><rect x="97.2" y="53.19999999999999" width="1.6" height="2.2" fill="none" stroke="#2038a8" stroke-width="0.5"/><rect x="130.2" y="53.19999999999999" width="1.6" height="2.2" fill="none" stroke="#2038a8" stroke-width="0.5"/><rect x="133.2" y="53.19999999999999" width="1.6" height="2.2" fill="none" stroke="#2038a8" stroke-width="0.5"/><rect x="29" y="56.30000000000001" width="114" height="4.8" fill="#8ecbe8"/><path d="M29.0 56.4l4.6 4.6M33.6 56.4l-4.6 4.6M32.3 56.4l4.6 4.6M36.9 56.4l-4.6 4.6M35.6 56.4l4.6 4.6M40.2 56.4l-4.6 4.6M38.9 56.4l4.6 4.6M43.5 56.4l-4.6 4.6M42.2 56.4l4.6 4.6M46.8 56.4l-4.6 4.6M45.5 56.4l4.6 4.6M50.1 56.4l-4.6 4.6M48.8 56.4l4.6 4.6M53.4 56.4l-4.6 4.6M52.1 56.4l4.6 4.6M56.7 56.4l-4.6 4.6M55.4 56.4l4.6 4.6M60.0 56.4l-4.6 4.6M58.7 56.4l4.6 4.6M63.3 56.4l-4.6 4.6M62.0 56.4l4.6 4.6M66.6 56.4l-4.6 4.6M65.3 56.4l4.6 4.6M69.9 56.4l-4.6 4.6M68.6 56.4l4.6 4.6M73.2 56.4l-4.6 4.6M71.9 56.4l4.6 4.6M76.5 56.4l-4.6 4.6M75.2 56.4l4.6 4.6M79.8 56.4l-4.6 4.6M78.5 56.4l4.6 4.6M83.1 56.4l-4.6 4.6M81.8 56.4l4.6 4.6M86.4 56.4l-4.6 4.6M85.1 56.4l4.6 4.6M89.7 56.4l-4.6 4.6M88.4 56.4l4.6 4.6M93.0 56.4l-4.6 4.6M91.7 56.4l4.6 4.6M96.3 56.4l-4.6 4.6M95.0 56.4l4.6 4.6M99.6 56.4l-4.6 4.6M98.3 56.4l4.6 4.6M102.9 56.4l-4.6 4.6M101.6 56.4l4.6 4.6M106.2 56.4l-4.6 4.6M104.9 56.4l4.6 4.6M109.5 56.4l-4.6 4.6M108.2 56.4l4.6 4.6M112.8 56.4l-4.6 4.6M111.5 56.4l4.6 4.6M116.1 56.4l-4.6 4.6M114.8 56.4l4.6 4.6M119.4 56.4l-4.6 4.6M118.1 56.4l4.6 4.6M122.7 56.4l-4.6 4.6M121.4 56.4l4.6 4.6M126.0 56.4l-4.6 4.6M124.7 56.4l4.6 4.6M129.3 56.4l-4.6 4.6M128.0 56.4l4.6 4.6M132.6 56.4l-4.6 4.6M131.3 56.4l4.6 4.6M135.9 56.4l-4.6 4.6M134.6 56.4l4.6 4.6M139.2 56.4l-4.6 4.6M137.9 56.4l4.6 4.6M142.5 56.4l-4.6 4.6" stroke="#4a9fdc" stroke-width="0.45" fill="none"/><path d="M29.0 61.1H139" stroke="#4a8fd6" stroke-width="0.5"/><rect x="29" y="61.30000000000001" width="110" height="10.3" fill="#bfd2dc"/><path d="M29.0 71.0l3.7 -9.4l3.7 9.4l3.7 -9.4l3.7 9.4l3.7 -9.4l3.7 9.4l3.7 -9.4l3.7 9.4l3.7 -9.4l3.7 9.4l3.7 -9.4l3.7 9.4l3.7 -9.4l3.7 9.4l3.7 -9.4l3.7 9.4l3.7 -9.4l3.7 9.4l3.7 -9.4l3.7 9.4l3.7 -9.4l3.7 9.4l3.7 -9.4l3.7 9.4l3.7 -9.4l3.7 9.4l3.7 -9.4l3.7 9.4l3.7 -9.4l3.7 9.4" stroke="#6cb6cc" stroke-width="0.65" fill="none"/><path d="M31.5 61.6V71.4" stroke="#3f7a82" stroke-width="0.8"/><path d="M62.5 61.6V71.4" stroke="#3f7a82" stroke-width="0.8"/><path d="M65.0 61.6V71.4" stroke="#3f7a82" stroke-width="0.8"/><path d="M96.0 61.6V71.4" stroke="#3f7a82" stroke-width="0.8"/><path d="M99.0 61.6V71.4" stroke="#3f7a82" stroke-width="0.8"/><path d="M129.0 61.6V71.4" stroke="#3f7a82" stroke-width="0.8"/><path d="M133.0 61.6V71.4" stroke="#3f7a82" stroke-width="0.8"/><rect x="127" y="72" width="12" height="122" fill="#bfd2dc"/><path d="M127.2 72.0l11 5.2l-11 5.2l11 5.2l-11 5.2l11 5.2l-11 5.2l11 5.2l-11 5.2l11 5.2l-11 5.2l11 5.2l-11 5.2l11 5.2l-11 5.2l11 5.2l-11 5.2l11 5.2l-11 5.2l11 5.2l-11 5.2l11 5.2l-11 5.2l11 5.2l-11 5.2" stroke="#6cb6cc" stroke-width="0.65" fill="none"/><path d="M127.3 76.8H138.60000000000002" stroke="#3f7a82" stroke-width="0.8"/><rect x="127.60000000000002" y="86" width="10.8" height="4.5" fill="#b4c2c4" stroke="#3f7a82" stroke-width="0.7"/><rect x="127.60000000000002" y="120.4" width="10.8" height="4.6" fill="#b4c2c4" stroke="#3f7a82" stroke-width="0.7"/><rect x="127.60000000000002" y="154.2" width="10.8" height="5.2" fill="#b4c2c4" stroke="#3f7a82" stroke-width="0.7"/><rect x="127.60000000000002" y="188.2" width="10.8" height="4.4" fill="#b4c2c4" stroke="#3f7a82" stroke-width="0.7"/><rect x="138.8" y="58" width="4.4" height="136" fill="#8ecbe8"/><path d="M138.8 58.0l4.4 4.4M143.2 58.0l-4.4 4.4M138.8 61.3l4.4 4.4M143.2 61.3l-4.4 4.4M138.8 64.6l4.4 4.4M143.2 64.6l-4.4 4.4M138.8 67.9l4.4 4.4M143.2 67.9l-4.4 4.4M138.8 71.2l4.4 4.4M143.2 71.2l-4.4 4.4M138.8 74.5l4.4 4.4M143.2 74.5l-4.4 4.4M138.8 77.8l4.4 4.4M143.2 77.8l-4.4 4.4M138.8 81.1l4.4 4.4M143.2 81.1l-4.4 4.4M138.8 84.4l4.4 4.4M143.2 84.4l-4.4 4.4M138.8 87.7l4.4 4.4M143.2 87.7l-4.4 4.4M138.8 91.0l4.4 4.4M143.2 91.0l-4.4 4.4M138.8 94.3l4.4 4.4M143.2 94.3l-4.4 4.4M138.8 97.6l4.4 4.4M143.2 97.6l-4.4 4.4M138.8 100.9l4.4 4.4M143.2 100.9l-4.4 4.4M138.8 104.2l4.4 4.4M143.2 104.2l-4.4 4.4M138.8 107.5l4.4 4.4M143.2 107.5l-4.4 4.4M138.8 110.8l4.4 4.4M143.2 110.8l-4.4 4.4M138.8 114.1l4.4 4.4M143.2 114.1l-4.4 4.4M138.8 117.4l4.4 4.4M143.2 117.4l-4.4 4.4M138.8 120.7l4.4 4.4M143.2 120.7l-4.4 4.4M138.8 124.0l4.4 4.4M143.2 124.0l-4.4 4.4M138.8 127.3l4.4 4.4M143.2 127.3l-4.4 4.4M138.8 130.6l4.4 4.4M143.2 130.6l-4.4 4.4M138.8 133.9l4.4 4.4M143.2 133.9l-4.4 4.4M138.8 137.2l4.4 4.4M143.2 137.2l-4.4 4.4M138.8 140.5l4.4 4.4M143.2 140.5l-4.4 4.4M138.8 143.8l4.4 4.4M143.2 143.8l-4.4 4.4M138.8 147.1l4.4 4.4M143.2 147.1l-4.4 4.4M138.8 150.4l4.4 4.4M143.2 150.4l-4.4 4.4M138.8 153.7l4.4 4.4M143.2 153.7l-4.4 4.4M138.8 157.0l4.4 4.4M143.2 157.0l-4.4 4.4M138.8 160.3l4.4 4.4M143.2 160.3l-4.4 4.4M138.8 163.6l4.4 4.4M143.2 163.6l-4.4 4.4M138.8 166.9l4.4 4.4M143.2 166.9l-4.4 4.4M138.8 170.2l4.4 4.4M143.2 170.2l-4.4 4.4M138.8 173.5l4.4 4.4M143.2 173.5l-4.4 4.4M138.8 176.8l4.4 4.4M143.2 176.8l-4.4 4.4M138.8 180.1l4.4 4.4M143.2 180.1l-4.4 4.4M138.8 183.4l4.4 4.4M143.2 183.4l-4.4 4.4M138.8 186.7l4.4 4.4M143.2 186.7l-4.4 4.4M138.8 190.0l4.4 4.4M143.2 190.0l-4.4 4.4" stroke="#4a9fdc" stroke-width="0.45" fill="none"/><rect x="143.2" y="54" width="4.2" height="140" fill="#cbbdf0"/><path d="M143.4 56.0V194M145.3 54.0V194M147.3 52.5V194" stroke="#3d62d8" stroke-width="0.6" fill="none"/><rect x="144.2" y="90" width="2.2" height="1.6" fill="none" stroke="#2038a8" stroke-width="0.5"/><rect x="144.2" y="124" width="2.2" height="1.6" fill="none" stroke="#2038a8" stroke-width="0.5"/><rect x="144.2" y="158" width="2.2" height="1.6" fill="none" stroke="#2038a8" stroke-width="0.5"/><rect x="144.2" y="190" width="2.2" height="1.6" fill="none" stroke="#2038a8" stroke-width="0.5"/><rect x="147.5" y="48" width="4.3" height="146" fill="#8ec5e4"/><path d="M148.0 49.0q5 2 2 4t-2 4M148.0 57.1q5 2 2 4t-2 4M148.0 65.2q5 2 2 4t-2 4M148.0 73.3q5 2 2 4t-2 4M148.0 81.4q5 2 2 4t-2 4M148.0 89.5q5 2 2 4t-2 4M148.0 97.6q5 2 2 4t-2 4M148.0 105.7q5 2 2 4t-2 4M148.0 113.8q5 2 2 4t-2 4M148.0 121.9q5 2 2 4t-2 4M148.0 130.0q5 2 2 4t-2 4M148.0 138.1q5 2 2 4t-2 4M148.0 146.2q5 2 2 4t-2 4M148.0 154.3q5 2 2 4t-2 4M148.0 162.4q5 2 2 4t-2 4M148.0 170.5q5 2 2 4t-2 4M148.0 178.6q5 2 2 4t-2 4M148.0 186.7q5 2 2 4t-2 4" fill="none" stroke="#2c7cc4" stroke-width="1.1"/><rect x="148.5" y="47.30000000000001" width="3" height="4.6" fill="#3a8ab0"/><path d="M28.8 72.5H138.60000000000002M126.1 72.5V194" fill="none" stroke="#0a0a0a" stroke-width="1.9"/><rect x="123" y="194.5" width="30.5" height="23.5" fill="#c3c3c4" stroke="#5a5f88" stroke-width="0.5"/><path d="M123.0 194.3H142" stroke="#222" stroke-width="0.8"/><path d="M125.2 195.0V218" stroke="#445" stroke-width="0.4" stroke-dasharray="1.4 1"/><rect x="131.60000000000002" y="196" width="5.6" height="22" fill="#c0c6d6" stroke="#2a5ad0" stroke-width="0.6"/><path d="M134.4 196.0V218" stroke="#2a5ad0" stroke-width="0.5"/><path d="M131.0 194.8H152" stroke="#2f86c8" stroke-width="1"/><rect x="132.2" y="196.2" width="2.6" height="2.4" fill="#1a9a9a"/><path d="M28.6 218.3H177" stroke="#e2e2e2" stroke-width="0.9"/><rect x="126.19999999999999" y="33.80000000000001" width="0.9" height="0.9" fill="#777"/><path d="M30.2 268.5L38.2 252.5M35.0 253.4L38.2 252.5L39.2 255.8" fill="none" stroke="#707070" stroke-width="0.6"/><path d="M30.2 268.5L46.2 277.4M42.6 277.8L46.2 277.4L44.4 274.2" fill="none" stroke="#c04848" stroke-width="0.6"/></svg>
<svg style="position:absolute;left:44px;top:430px" width="30" height="30" viewBox="0 0 30 30"><path d="M5.7 7.5V23H20" fill="none" stroke="#7c8088" stroke-width="0.7"/><text x="7" y="8.4" font-size="5.2" font-family="Liberation Sans,sans-serif" fill="#6e737c">y</text><text x="20.8" y="24" font-size="5.2" font-family="Liberation Sans,sans-serif" fill="#6e737c">x</text></svg>
<svg style="position:absolute;left:421.7px;top:396px" width="7" height="10" viewBox="0 0 7 10"><path d="M0.5 0.5V7.6L2.2 6.1L3.4 8.9L4.5 8.4L3.3 5.7L5.6 5.6Z" fill="#fff" stroke="#111" stroke-width="0.6"/></svg>
<div style="left:31.9px;top:471px;width:36.7px;height:10.4px;background:#e1e1e3;border-radius:0 0 2.5px 2.5px;"></div>
<div class="t" style="left:35.5px;top:471.60px;line-height:10px;font-size:5.8px;color:#222;letter-spacing:-0.073px;">Perspektive</div>
<div style="left:68.4px;top:471px;width:21.400000000000002px;height:10.4px;background:#e1e1e3;border-radius:0 0 2.5px 2.5px;"></div>
<div class="t" style="left:72px;top:471.60px;line-height:10px;font-size:5.8px;color:#222;letter-spacing:0.003px;">Drauf</div>
<div style="left:89.7px;top:471px;width:21.100000000000005px;height:10.4px;background:#e1e1e3;border-radius:0 0 2.5px 2.5px;"></div>
<div class="t" style="left:93.3px;top:471.60px;line-height:10px;font-size:5.8px;color:#222;letter-spacing:0.072px;">Front</div>
<div style="left:110.7px;top:471px;width:24.200000000000014px;height:10.4px;background:#e1e1e3;border-radius:0 0 2.5px 2.5px;"></div>
<div class="t" style="left:114.3px;top:471.60px;line-height:10px;font-size:5.8px;color:#222;letter-spacing:-0.175px;">Rechts</div>
<div style="left:135.5px;top:471px;width:73.2px;height:10.4px;background:#e1e1e3;border-radius:0 0 2.5px 2.5px;"></div>
<div class="t" style="left:139.1px;top:471.60px;line-height:10px;font-size:5.8px;color:#222;letter-spacing:0.025px;">Ansichten Volumenmodel</div>
<div style="left:208.6px;top:471px;width:42.000000000000014px;height:10.4px;background:#e1e1e3;border-radius:0 0 2.5px 2.5px;"></div>
<div class="t" style="left:212.2px;top:471.60px;line-height:10px;font-size:5.8px;color:#222;letter-spacing:-0.002px;">Ansicht_Nord</div>
<div style="left:250.8px;top:471px;width:41.3px;height:10.4px;background:#e1e1e3;border-radius:0 0 2.5px 2.5px;"></div>
<div class="t" style="left:254.4px;top:471.60px;line-height:10px;font-size:5.8px;color:#222;letter-spacing:-0.104px;">Ansicht_West</div>
<div style="left:292.7px;top:471px;width:37.7px;height:10.4px;background:#e1e1e3;border-radius:0 0 2.5px 2.5px;"></div>
<div class="t" style="left:296.3px;top:471.60px;line-height:10px;font-size:5.8px;color:#222;letter-spacing:-0.188px;">Ansicht_Süd</div>
<div style="left:331.0px;top:471px;width:38.09999999999998px;height:10.4px;background:#e1e1e3;border-radius:0 0 2.5px 2.5px;"></div>
<div class="t" style="left:334.6px;top:471.60px;line-height:10px;font-size:5.8px;color:#222;letter-spacing:-0.034px;">Ansicht_Ost</div>
<div style="left:367.9px;top:471px;width:24.2px;height:10.4px;background:#e1e1e3;border-radius:0 0 2.5px 2.5px;"></div>
<div class="t" style="left:371.5px;top:471.60px;line-height:10px;font-size:5.8px;color:#222;letter-spacing:-0.058px;">3-Tafel</div>
<div style="left:391.4px;top:471px;width:58.59999999999998px;height:10.4px;background:#f3f3f4;border-radius:0 0 2.5px 2.5px;"></div>
<div class="t" style="left:395px;top:471.60px;line-height:10px;font-size:5.8px;color:#222;letter-spacing:-0.243px;">Grundriss_EG_1zu20</div>
<div style="left:449.4px;top:471px;width:58.2px;height:10.4px;background:#e1e1e3;border-radius:0 0 2.5px 2.5px;"></div>
<div class="t" style="left:453px;top:471.60px;line-height:10px;font-size:5.8px;color:#222;letter-spacing:-0.265px;">Grundriss_EG_1zu50</div>
<div style="left:506.4px;top:471px;width:61.40000000000005px;height:10.4px;background:#e1e1e3;border-radius:0 0 2.5px 2.5px;"></div>
<div class="t" style="left:510px;top:471.60px;line-height:10px;font-size:5.8px;color:#222;letter-spacing:-0.253px;">Grundriss_EG_1zu100</div>
<svg style="position:absolute;left:570.5px;top:473px" width="7" height="7" viewBox="0 0 7 7"><path d="M3.5 0.6L6.4 3.5L3.5 6.4L0.6 3.5Z" fill="#e8e8e8" stroke="#999" stroke-width="0.5"/><path d="M3.5 2V5M2 3.5H5" stroke="#555" stroke-width="0.6"/></svg>
<div style="left:660px;top:77px;width:270px;height:10px;background:#ececec;"></div>
<div style="left:660px;top:87px;width:270px;height:384px;background:#ffffff;"></div>
<div style="left:660.5px;top:77.6px;width:50.4px;height:9.6px;background:#e3e3e3;border-radius:2px 2px 0 0;"></div>
<div style="left:662.3px;top:79.1px;width:7.2px;height:7.2px;background:conic-gradient(#e8302a,#f0d020,#30c040,#20b0e0,#3040e0,#c030c0,#e8302a);border-radius:50%;border:0.6px solid #333;"></div>
<div class="t" style="left:670.5px;top:77.70px;line-height:10px;font-size:5.8px;color:#222;letter-spacing:-0.051px;">Eigenschaften</div>
<div style="left:711.5px;top:77.6px;width:35.4px;height:9.6px;background:#f6f6f6;border-radius:2px 2px 0 0;border:0.5px solid #d4d4d4;border-bottom:none;"></div>
<svg style="position:absolute;left:714.6px;top:78.6px" width="8" height="8" viewBox="0 0 8 8"><path d="M0.5 2.2L4 0.8L7.5 2.2L4 3.8Z" fill="#e8483a" stroke="#8a1a10" stroke-width="0.4"/><path d="M0.5 3.6L4 5.2L7.5 3.6V5L4 6.6L0.5 5Z" fill="#d03020"/><path d="M0.5 5.4L4 7L7.5 5.4" fill="none" stroke="#7a1a10" stroke-width="0.6"/></svg>
<div class="t" style="left:723.2px;top:77.70px;line-height:10px;font-size:5.8px;color:#222;letter-spacing:-0.216px;">Ebenen</div>
<div style="left:747.5px;top:77.6px;width:41.4px;height:9.6px;background:#e3e3e3;border-radius:2px 2px 0 0;"></div>
<svg style="position:absolute;left:750.4px;top:78.6px" width="8" height="8" viewBox="0 0 8 8"><circle cx="3.8" cy="4.2" r="3" fill="#2a50b0"/><circle cx="3" cy="3.4" r="1.2" fill="#8ab0f0"/><path d="M5 1L7.6 0.4L6.6 3" fill="#555"/></svg>
<div class="t" style="left:759px;top:77.70px;line-height:10px;font-size:5.8px;color:#222;letter-spacing:-0.196px;">Rendering</div>
<div style="left:789.5px;top:77.6px;width:43.9px;height:9.6px;background:#e3e3e3;border-radius:2px 2px 0 0;"></div>
<svg style="position:absolute;left:792.9px;top:78.6px" width="8" height="8" viewBox="0 0 8 8"><path d="M1 7L5.5 1.6L7 2.8L2.4 7.4Z" fill="#d8a0a0" stroke="#8a4040" stroke-width="0.5"/><path d="M5.5 1.6L6.6 0.6L7.6 1.6L7 2.8Z" fill="#c03030"/></svg>
<div class="t" style="left:801.5px;top:77.70px;line-height:10px;font-size:5.8px;color:#222;letter-spacing:-0.006px;">Materialien</div>
<div style="left:834px;top:77.6px;width:47.9px;height:9.6px;background:#e3e3e3;border-radius:2px 2px 0 0;"></div>
<svg style="position:absolute;left:838.1px;top:78.6px" width="8" height="8" viewBox="0 0 8 8"><path d="M0.6 1.8H3.2L4 2.8H7.4V6.8H0.6Z" fill="#f0c040" stroke="#9a7410" stroke-width="0.5"/></svg>
<div class="t" style="left:846.7px;top:77.70px;line-height:10px;font-size:5.8px;color:#222;letter-spacing:-0.075px;">Bibliotheken</div>
<div style="left:882.5px;top:77.6px;width:27.9px;height:9.6px;background:#e3e3e3;border-radius:2px 2px 0 0;"></div>
<svg style="position:absolute;left:886.3px;top:78.6px" width="8" height="8" viewBox="0 0 8 8"><rect x="0.4" y="1" width="7.2" height="5.6" fill="#3a56c8" stroke="#1a2a80" stroke-width="0.5"/><path d="M1.2 2H6.8V4H1.2Z" fill="#9ab4f4"/></svg>
<div class="t" style="left:894.9px;top:77.70px;line-height:10px;font-size:5.8px;color:#222;letter-spacing:0.019px;">Hilfe</div>
<svg style="position:absolute;left:921.6px;top:78.6px" width="8" height="8" viewBox="0 0 8 8"><circle cx="4" cy="4" r="2.5" fill="#e4e4e4" stroke="#bdbdbd" stroke-width="1.3" stroke-dasharray="1.1 0.7"/></svg>
<svg style="position:absolute;left:661.30px;top:88.70px" width="8.8" height="8.8" viewBox="0 0 12 12"><path d="M2.5 1.2H7L9.2 3.4V10.4H2.5Z" fill="#fff" stroke="#222" stroke-width="0.8"/></svg>
<svg style="position:absolute;left:673.30px;top:88.70px" width="8.8" height="8.8" viewBox="0 0 12 12"><path d="M2 1.5H5.5L7 3V7.5H2Z" fill="#fff" stroke="#222" stroke-width="0.7"/><path d="M4.8 4.2H8.2L9.8 5.8V10.5H4.8Z" fill="#fff" stroke="#222" stroke-width="0.7"/></svg>
<svg style="position:absolute;left:685.30px;top:88.70px" width="8.8" height="8.8" viewBox="0 0 12 12"><path d="M2.2 2L9.6 10M9.6 2L2.2 10" stroke="#d81e1e" stroke-width="1.5"/></svg>
<svg style="position:absolute;left:697.30px;top:88.70px" width="8.8" height="8.8" viewBox="0 0 12 12"><path d="M2.4 8L6 3.4L9.6 8Z" fill="#c4c4c4"/></svg>
<svg style="position:absolute;left:709.60px;top:88.70px" width="8.8" height="8.8" viewBox="0 0 12 12"><path d="M2.4 4L6 8.6L9.6 4Z" fill="#5a6ad8" stroke="#2a3aa0" stroke-width="0.6"/></svg>
<svg style="position:absolute;left:721.60px;top:88.70px" width="8.8" height="8.8" viewBox="0 0 12 12"><path d="M8.4 2V10L3.6 6Z" fill="#d02222" stroke="#7a0a0a" stroke-width="0.5"/></svg>
<svg style="position:absolute;left:733.60px;top:88.70px" width="8.8" height="8.8" viewBox="0 0 12 12"><path d="M2 2H9.6L6.8 5.6V10L4.8 9V5.6Z" fill="#3a5ad0" stroke="#1a2a80" stroke-width="0.5"/><rect x="9" y="9" width="1.6" height="1.6" fill="#333"/></svg>
<svg style="position:absolute;left:745.70px;top:88.70px" width="8.8" height="8.8" viewBox="0 0 12 12"><path d="M2.5 1.6H8V8H2.5Z" fill="#fff" stroke="#222" stroke-width="0.7"/><path d="M3.6 3.4H7M3.6 5H7" stroke="#555" stroke-width="0.5"/><rect x="5.6" y="6" width="4.6" height="4.4" fill="#ddd" stroke="#222" stroke-width="0.6"/></svg>
<svg style="position:absolute;left:757.10px;top:88.70px" width="8.8" height="8.8" viewBox="0 0 12 12"><path d="M2 10L6.5 5" stroke="#333" stroke-width="1.3"/><path d="M4.5 2.5L8 1.8L9.8 4.4L7 5.6Z" fill="#333"/><rect x="9" y="9" width="1.6" height="1.6" fill="#333"/></svg>
<svg style="position:absolute;left:768.90px;top:88.70px" width="8.8" height="8.8" viewBox="0 0 12 12"><circle cx="6" cy="6" r="4" fill="#3850c8" stroke="#1a2a80" stroke-width="0.5"/><text x="4.4" y="8.2" font-size="6" font-weight="bold" font-family="Liberation Sans,sans-serif" fill="#dfe6ff">?</text></svg>
<div style="left:660px;top:98.6px;width:270px;height:0.5px;background:#ececec;"></div>
<div class="t" style="left:663px;top:99.80px;line-height:10px;font-size:5.8px;color:#222;">Name</div>
<div class="t" style="left:815px;top:99.80px;line-height:10px;font-size:5.8px;color:#222;">Material</div>
<div class="t" style="left:854px;top:99.80px;line-height:10px;font-size:5.8px;color:#222;">Linientyp</div>
<div class="t" style="left:900.6px;top:99.80px;line-height:10px;font-size:5.8px;color:#222;clip-path:inset(0 0 0 0);">Druckbreite</div>
<div class="t" style="left:671.3px;top:110.30px;line-height:10px;font-size:5.8px;color:#1a1a1a;">Standard</div>
<svg style="position:absolute;left:788.05px;top:112.00px" width="4.9" height="6.2" viewBox="0 0 6 7.6"><path d="M3 0.5C1.5 0.5 0.7 1.5 0.7 2.6C0.7 3.6 1.6 4.2 1.9 5H4.1C4.4 4.2 5.3 3.6 5.3 2.6C5.3 1.5 4.5 0.5 3 0.5Z" fill="#fdf7a0" stroke="#5f5a18" stroke-width="0.75"/><path d="M2 5.8H4M2.2 6.8H3.8" stroke="#444" stroke-width="0.7"/></svg>
<svg style="position:absolute;left:796.40px;top:111.80px" width="6.2" height="6.7" viewBox="0 0 7 7.6"><path d="M3.6 3.6V2C3.6 0.2 6.3 0.2 6.3 2V2.6" fill="none" stroke="#555" stroke-width="0.7"/><rect x="0.6" y="3.5" width="4.6" height="3.5" fill="#f2e24a" stroke="#6a6210" stroke-width="0.55"/></svg>
<svg style="position:absolute;left:802px;top:110px" width="11" height="11" viewBox="0 0 11 11"><rect x="2.6" y="2.45" width="5.6" height="5.7" fill="#000" stroke="none" stroke-width="0.6"/></svg>
<div class="t" style="left:852px;top:110.30px;line-height:10px;font-size:5.8px;color:#1a1a1a;">Durchgehend</div>
<svg style="position:absolute;left:889.8px;top:111.70px" width="7.2" height="7.2" viewBox="0 0 7.2 7.2"><path d="M3.6 0.7L6.5 3.6L3.6 6.5L0.7 3.6Z" fill="#000" stroke="#000" stroke-width="0.45"/></svg>
<div class="t" style="left:899px;top:110.30px;line-height:10px;font-size:5.8px;color:#1a1a1a;">Standard</div>
<div class="t" style="left:671.3px;top:119.50px;line-height:10px;font-size:5.8px;color:#1a1a1a;">3D</div>
<svg style="position:absolute;left:662.90px;top:122.50px" width="5" height="4" viewBox="0 0 5 4"><path d="M0.6 0.8L2.5 2.8L4.4 0.8" fill="none" stroke="#444" stroke-width="0.7"/></svg>
<svg style="position:absolute;left:788.05px;top:121.20px" width="4.9" height="6.2" viewBox="0 0 6 7.6"><path d="M3 0.5C1.5 0.5 0.7 1.5 0.7 2.6C0.7 3.6 1.6 4.2 1.9 5H4.1C4.4 4.2 5.3 3.6 5.3 2.6C5.3 1.5 4.5 0.5 3 0.5Z" fill="#fdf7a0" stroke="#5f5a18" stroke-width="0.75"/><path d="M2 5.8H4M2.2 6.8H3.8" stroke="#444" stroke-width="0.7"/></svg>
<svg style="position:absolute;left:796.40px;top:121.00px" width="6.2" height="6.7" viewBox="0 0 7 7.6"><path d="M3.6 3.6V2C3.6 0.2 6.3 0.2 6.3 2V2.6" fill="none" stroke="#555" stroke-width="0.7"/><rect x="0.6" y="3.5" width="4.6" height="3.5" fill="#f2e24a" stroke="#6a6210" stroke-width="0.55"/></svg>
<svg style="position:absolute;left:802px;top:119px" width="11" height="11" viewBox="0 0 11 11"><rect x="2.6" y="2.65" width="5.6" height="5.7" fill="#0a7a0a" stroke="none" stroke-width="0.6"/></svg>
<div class="t" style="left:852px;top:119.50px;line-height:10px;font-size:5.8px;color:#1a1a1a;">Durchgehend</div>
<svg style="position:absolute;left:889.8px;top:120.90px" width="7.2" height="7.2" viewBox="0 0 7.2 7.2"><path d="M3.6 0.7L6.5 3.6L3.6 6.5L0.7 3.6Z" fill="#0a7a0a" stroke="#0a7a0a" stroke-width="0.45"/></svg>
<div class="t" style="left:899px;top:119.50px;line-height:10px;font-size:5.8px;color:#1a1a1a;">Standard</div>
<div style="left:660px;top:129.2px;width:268.2px;height:8.8px;background:#0a78d6;"></div>
<div class="t" style="left:679.1999999999999px;top:128.70px;line-height:10px;font-size:5.8px;color:#fff;">Volumenmodell</div>
<svg style="position:absolute;left:788.05px;top:130.40px" width="4.9" height="6.2" viewBox="0 0 6 7.6"><path d="M3 0.5C1.5 0.5 0.7 1.5 0.7 2.6C0.7 3.6 1.6 4.2 1.9 5H4.1C4.4 4.2 5.3 3.6 5.3 2.6C5.3 1.5 4.5 0.5 3 0.5Z" fill="#4a8ae0" stroke="#e8f0ff" stroke-width="0.75"/><path d="M2 5.8H4M2.2 6.8H3.8" stroke="#444" stroke-width="0.7"/></svg>
<svg style="position:absolute;left:796.40px;top:130.20px" width="6.2" height="6.7" viewBox="0 0 7 7.6"><path d="M3.6 3.6V2C3.6 0.2 6.3 0.2 6.3 2V2.6" fill="none" stroke="#555" stroke-width="0.7"/><rect x="0.6" y="3.5" width="4.6" height="3.5" fill="#f2e24a" stroke="#6a6210" stroke-width="0.55"/></svg>
<svg style="position:absolute;left:802px;top:128px" width="11" height="11" viewBox="0 0 11 11"><rect x="2.6" y="2.85" width="5.6" height="5.7" fill="#000" stroke="#fff" stroke-width="0.6"/></svg>
<div style="left:813px;top:130.1px;width:7.2px;height:7.2px;background:#fff;border-radius:50%;"></div>
<div class="t" style="left:852px;top:128.70px;line-height:10px;font-size:5.8px;color:#fff;">Durchgehend</div>
<svg style="position:absolute;left:889.8px;top:130.10px" width="7.2" height="7.2" viewBox="0 0 7.2 7.2"><path d="M3.6 0.7L6.5 3.6L3.6 6.5L0.7 3.6Z" fill="#000" stroke="#fff" stroke-width="0.45"/></svg>
<div class="t" style="left:899px;top:128.70px;line-height:10px;font-size:5.8px;color:#fff;">Standard</div>
<div class="t" style="left:679.1999999999999px;top:137.90px;line-height:10px;font-size:5.8px;color:#1a1a1a;">Wände</div>
<svg style="position:absolute;left:788.05px;top:139.60px" width="4.9" height="6.2" viewBox="0 0 6 7.6"><path d="M3 0.5C1.5 0.5 0.7 1.5 0.7 2.6C0.7 3.6 1.6 4.2 1.9 5H4.1C4.4 4.2 5.3 3.6 5.3 2.6C5.3 1.5 4.5 0.5 3 0.5Z" fill="#fdf7a0" stroke="#5f5a18" stroke-width="0.75"/><path d="M2 5.8H4M2.2 6.8H3.8" stroke="#444" stroke-width="0.7"/></svg>
<svg style="position:absolute;left:796.40px;top:139.40px" width="6.2" height="6.7" viewBox="0 0 7 7.6"><path d="M3.6 3.6V2C3.6 0.2 6.3 0.2 6.3 2V2.6" fill="none" stroke="#555" stroke-width="0.7"/><rect x="0.6" y="3.5" width="4.6" height="3.5" fill="#f2e24a" stroke="#6a6210" stroke-width="0.55"/></svg>
<svg style="position:absolute;left:802px;top:137px" width="11" height="11" viewBox="0 0 11 11"><rect x="2.6" y="3.05" width="5.6" height="5.7" fill="#000" stroke="none" stroke-width="0.6"/></svg>
<div class="t" style="left:852px;top:137.90px;line-height:10px;font-size:5.8px;color:#1a1a1a;">Durchgehend</div>
<svg style="position:absolute;left:889.8px;top:139.30px" width="7.2" height="7.2" viewBox="0 0 7.2 7.2"><path d="M3.6 0.7L6.5 3.6L3.6 6.5L0.7 3.6Z" fill="#000" stroke="#000" stroke-width="0.45"/></svg>
<div class="t" style="left:899px;top:137.90px;line-height:10px;font-size:5.8px;color:#1a1a1a;">Standard</div>
<div class="t" style="left:679.1999999999999px;top:147.10px;line-height:10px;font-size:5.8px;color:#1a1a1a;">Schnittebenen</div>
<svg style="position:absolute;left:788.05px;top:148.80px" width="4.9" height="6.2" viewBox="0 0 6 7.6"><path d="M3 0.5C1.5 0.5 0.7 1.5 0.7 2.6C0.7 3.6 1.6 4.2 1.9 5H4.1C4.4 4.2 5.3 3.6 5.3 2.6C5.3 1.5 4.5 0.5 3 0.5Z" fill="#fdf7a0" stroke="#5f5a18" stroke-width="0.75"/><path d="M2 5.8H4M2.2 6.8H3.8" stroke="#444" stroke-width="0.7"/></svg>
<svg style="position:absolute;left:796.40px;top:148.60px" width="6.2" height="6.7" viewBox="0 0 7 7.6"><path d="M3.6 3.6V2C3.6 0.2 6.3 0.2 6.3 2V2.6" fill="none" stroke="#555" stroke-width="0.7"/><rect x="0.6" y="3.5" width="4.6" height="3.5" fill="#f2e24a" stroke="#6a6210" stroke-width="0.55"/></svg>
<svg style="position:absolute;left:802px;top:147px" width="11" height="11" viewBox="0 0 11 11"><rect x="2.6" y="2.25" width="5.6" height="5.7" fill="#000" stroke="none" stroke-width="0.6"/></svg>
<div class="t" style="left:852px;top:147.10px;line-height:10px;font-size:5.8px;color:#1a1a1a;">Durchgehend</div>
<svg style="position:absolute;left:889.8px;top:148.50px" width="7.2" height="7.2" viewBox="0 0 7.2 7.2"><path d="M3.6 0.7L6.5 3.6L3.6 6.5L0.7 3.6Z" fill="#000" stroke="#000" stroke-width="0.45"/></svg>
<div class="t" style="left:899px;top:147.10px;line-height:10px;font-size:5.8px;color:#1a1a1a;">Standard</div>
<div class="t" style="left:679.1999999999999px;top:156.30px;line-height:10px;font-size:5.8px;color:#1a1a1a;font-weight:bold;letter-spacing:-0.445px;">Fassade</div>
<svg style="position:absolute;left:779.5px;top:158.30px" width="7" height="6" viewBox="0 0 7 6"><path d="M0.8 3.2L2.6 5L6.2 0.8" fill="none" stroke="#222" stroke-width="0.8"/></svg>
<svg style="position:absolute;left:802px;top:156px" width="11" height="11" viewBox="0 0 11 11"><rect x="2.6" y="2.45" width="5.6" height="5.7" fill="#000" stroke="none" stroke-width="0.6"/></svg>
<div class="t" style="left:852px;top:156.30px;line-height:10px;font-size:5.8px;color:#1a1a1a;font-weight:bold;letter-spacing:-0.177px;">Durchgehe...</div>
<svg style="position:absolute;left:889.8px;top:157.70px" width="7.2" height="7.2" viewBox="0 0 7.2 7.2"><path d="M3.6 0.7L6.5 3.6L3.6 6.5L0.7 3.6Z" fill="#000" stroke="#000" stroke-width="0.45"/></svg>
<div class="t" style="left:899px;top:156.30px;line-height:10px;font-size:5.8px;color:#1a1a1a;font-weight:bold;letter-spacing:-0.217px;">Standard</div>
<div class="t" style="left:671.3px;top:165.50px;line-height:10px;font-size:5.8px;color:#1a1a1a;">2D</div>
<svg style="position:absolute;left:662.90px;top:168.50px" width="5" height="4" viewBox="0 0 5 4"><path d="M0.6 0.8L2.5 2.8L4.4 0.8" fill="none" stroke="#444" stroke-width="0.7"/></svg>
<svg style="position:absolute;left:788.05px;top:167.20px" width="4.9" height="6.2" viewBox="0 0 6 7.6"><path d="M3 0.5C1.5 0.5 0.7 1.5 0.7 2.6C0.7 3.6 1.6 4.2 1.9 5H4.1C4.4 4.2 5.3 3.6 5.3 2.6C5.3 1.5 4.5 0.5 3 0.5Z" fill="#fdf7a0" stroke="#5f5a18" stroke-width="0.75"/><path d="M2 5.8H4M2.2 6.8H3.8" stroke="#444" stroke-width="0.7"/></svg>
<svg style="position:absolute;left:796.40px;top:167.00px" width="6.2" height="6.7" viewBox="0 0 7 7.6"><path d="M3.6 3.6V2C3.6 0.2 6.3 0.2 6.3 2V2.6" fill="none" stroke="#555" stroke-width="0.7"/><rect x="0.6" y="3.5" width="4.6" height="3.5" fill="#f2e24a" stroke="#6a6210" stroke-width="0.55"/></svg>
<svg style="position:absolute;left:802px;top:165px" width="11" height="11" viewBox="0 0 11 11"><rect x="2.6" y="2.65" width="5.6" height="5.7" fill="#fff" stroke="#111" stroke-width="0.6"/></svg>
<div class="t" style="left:852px;top:165.50px;line-height:10px;font-size:5.8px;color:#1a1a1a;">Durchgehend</div>
<svg style="position:absolute;left:889.8px;top:166.90px" width="7.2" height="7.2" viewBox="0 0 7.2 7.2"><path d="M3.6 0.7L6.5 3.6L3.6 6.5L0.7 3.6Z" fill="#fff" stroke="#333" stroke-width="0.45"/></svg>
<div class="t" style="left:899px;top:165.50px;line-height:10px;font-size:5.8px;color:#1a1a1a;">Standard</div>
<div class="t" style="left:679.1999999999999px;top:174.70px;line-height:10px;font-size:5.8px;color:#1a1a1a;">Grundstueck</div>
<svg style="position:absolute;left:671.80px;top:177.10px" width="4" height="5" viewBox="0 0 4 5"><path d="M0.8 0.6L2.8 2.5L0.8 4.4" fill="none" stroke="#999" stroke-width="0.7"/></svg>
<svg style="position:absolute;left:788.05px;top:176.40px" width="4.9" height="6.2" viewBox="0 0 6 7.6"><path d="M3 0.5C1.5 0.5 0.7 1.5 0.7 2.6C0.7 3.6 1.6 4.2 1.9 5H4.1C4.4 4.2 5.3 3.6 5.3 2.6C5.3 1.5 4.5 0.5 3 0.5Z" fill="#6a8fe0" stroke="#2a3f90" stroke-width="0.75"/><path d="M2 5.8H4M2.2 6.8H3.8" stroke="#444" stroke-width="0.7"/></svg>
<svg style="position:absolute;left:796.40px;top:176.20px" width="6.2" height="6.7" viewBox="0 0 7 7.6"><path d="M3.6 3.6V2C3.6 0.2 6.3 0.2 6.3 2V2.6" fill="none" stroke="#555" stroke-width="0.7"/><rect x="0.6" y="3.5" width="4.6" height="3.5" fill="#f2e24a" stroke="#6a6210" stroke-width="0.55"/></svg>
<svg style="position:absolute;left:802px;top:174px" width="11" height="11" viewBox="0 0 11 11"><rect x="2.6" y="2.85" width="5.6" height="5.7" fill="#c80a0a" stroke="none" stroke-width="0.6"/></svg>
<div class="t" style="left:852px;top:174.70px;line-height:10px;font-size:5.8px;color:#1a1a1a;">Durchgehend</div>
<svg style="position:absolute;left:889.8px;top:176.10px" width="7.2" height="7.2" viewBox="0 0 7.2 7.2"><path d="M3.6 0.7L6.5 3.6L3.6 6.5L0.7 3.6Z" fill="#000" stroke="#000" stroke-width="0.45"/></svg>
<div class="t" style="left:899px;top:174.70px;line-height:10px;font-size:5.8px;color:#1a1a1a;">Standard</div>
<div class="t" style="left:679.1999999999999px;top:183.90px;line-height:10px;font-size:5.8px;color:#1a1a1a;">Lageplan</div>
<svg style="position:absolute;left:671.80px;top:186.30px" width="4" height="5" viewBox="0 0 4 5"><path d="M0.8 0.6L2.8 2.5L0.8 4.4" fill="none" stroke="#999" stroke-width="0.7"/></svg>
<svg style="position:absolute;left:788.05px;top:185.60px" width="4.9" height="6.2" viewBox="0 0 6 7.6"><path d="M3 0.5C1.5 0.5 0.7 1.5 0.7 2.6C0.7 3.6 1.6 4.2 1.9 5H4.1C4.4 4.2 5.3 3.6 5.3 2.6C5.3 1.5 4.5 0.5 3 0.5Z" fill="#6a8fe0" stroke="#2a3f90" stroke-width="0.75"/><path d="M2 5.8H4M2.2 6.8H3.8" stroke="#444" stroke-width="0.7"/></svg>
<svg style="position:absolute;left:796.40px;top:185.40px" width="6.2" height="6.7" viewBox="0 0 7 7.6"><path d="M1.8 3.6V2.2C1.8 0.3 4.8 0.3 4.8 2.2V3.6" fill="none" stroke="#4a4a9a" stroke-width="0.7"/><rect x="0.9" y="3.5" width="4.8" height="3.5" fill="#8a8ae0" stroke="#3a3a8a" stroke-width="0.55"/></svg>
<svg style="position:absolute;left:802px;top:183px" width="11" height="11" viewBox="0 0 11 11"><rect x="2.6" y="3.05" width="5.6" height="5.7" fill="#0a0ae6" stroke="none" stroke-width="0.6"/></svg>
<div class="t" style="left:852px;top:183.90px;line-height:10px;font-size:5.8px;color:#1a1a1a;">Durchgehend</div>
<svg style="position:absolute;left:889.8px;top:185.30px" width="7.2" height="7.2" viewBox="0 0 7.2 7.2"><path d="M3.6 0.7L6.5 3.6L3.6 6.5L0.7 3.6Z" fill="#000" stroke="#000" stroke-width="0.45"/></svg>
<div class="t" style="left:899px;top:183.90px;line-height:10px;font-size:5.8px;color:#1a1a1a;">Standard</div>
<div class="t" style="left:679.1999999999999px;top:193.10px;line-height:10px;font-size:5.8px;color:#1a1a1a;">Modellierhilfen</div>
<svg style="position:absolute;left:788.05px;top:194.80px" width="4.9" height="6.2" viewBox="0 0 6 7.6"><path d="M3 0.5C1.5 0.5 0.7 1.5 0.7 2.6C0.7 3.6 1.6 4.2 1.9 5H4.1C4.4 4.2 5.3 3.6 5.3 2.6C5.3 1.5 4.5 0.5 3 0.5Z" fill="#6a8fe0" stroke="#2a3f90" stroke-width="0.75"/><path d="M2 5.8H4M2.2 6.8H3.8" stroke="#444" stroke-width="0.7"/></svg>
<svg style="position:absolute;left:796.40px;top:194.60px" width="6.2" height="6.7" viewBox="0 0 7 7.6"><path d="M3.6 3.6V2C3.6 0.2 6.3 0.2 6.3 2V2.6" fill="none" stroke="#555" stroke-width="0.7"/><rect x="0.6" y="3.5" width="4.6" height="3.5" fill="#f2e24a" stroke="#6a6210" stroke-width="0.55"/></svg>
<svg style="position:absolute;left:802px;top:193px" width="11" height="11" viewBox="0 0 11 11"><rect x="2.6" y="2.25" width="5.6" height="5.7" fill="#000" stroke="none" stroke-width="0.6"/></svg>
<div class="t" style="left:852px;top:193.10px;line-height:10px;font-size:5.8px;color:#1a1a1a;">Durchgehend</div>
<svg style="position:absolute;left:889.8px;top:194.50px" width="7.2" height="7.2" viewBox="0 0 7.2 7.2"><path d="M3.6 0.7L6.5 3.6L3.6 6.5L0.7 3.6Z" fill="#000" stroke="#000" stroke-width="0.45"/></svg>
<div class="t" style="left:899px;top:193.10px;line-height:10px;font-size:5.8px;color:#1a1a1a;">Standard</div>
<div class="t" style="left:679.1999999999999px;top:202.30px;line-height:10px;font-size:5.8px;color:#1a1a1a;">Grundriss_EG</div>
<svg style="position:absolute;left:670.80px;top:205.30px" width="5" height="4" viewBox="0 0 5 4"><path d="M0.6 0.8L2.5 2.8L4.4 0.8" fill="none" stroke="#444" stroke-width="0.7"/></svg>
<svg style="position:absolute;left:788.05px;top:204.00px" width="4.9" height="6.2" viewBox="0 0 6 7.6"><path d="M3 0.5C1.5 0.5 0.7 1.5 0.7 2.6C0.7 3.6 1.6 4.2 1.9 5H4.1C4.4 4.2 5.3 3.6 5.3 2.6C5.3 1.5 4.5 0.5 3 0.5Z" fill="#fdf7a0" stroke="#5f5a18" stroke-width="0.75"/><path d="M2 5.8H4M2.2 6.8H3.8" stroke="#444" stroke-width="0.7"/></svg>
<svg style="position:absolute;left:796.40px;top:203.80px" width="6.2" height="6.7" viewBox="0 0 7 7.6"><path d="M3.6 3.6V2C3.6 0.2 6.3 0.2 6.3 2V2.6" fill="none" stroke="#555" stroke-width="0.7"/><rect x="0.6" y="3.5" width="4.6" height="3.5" fill="#f2e24a" stroke="#6a6210" stroke-width="0.55"/></svg>
<svg style="position:absolute;left:802px;top:202px" width="11" height="11" viewBox="0 0 11 11"><rect x="2.6" y="2.45" width="5.6" height="5.7" fill="#000" stroke="none" stroke-width="0.6"/></svg>
<div class="t" style="left:852px;top:202.30px;line-height:10px;font-size:5.8px;color:#1a1a1a;">Durchgehend</div>
<svg style="position:absolute;left:889.8px;top:203.70px" width="7.2" height="7.2" viewBox="0 0 7.2 7.2"><path d="M3.6 0.7L6.5 3.6L3.6 6.5L0.7 3.6Z" fill="#000" stroke="#000" stroke-width="0.45"/></svg>
<div class="t" style="left:899px;top:202.30px;line-height:10px;font-size:5.8px;color:#1a1a1a;">Standard</div>
<div class="t" style="left:687.0999999999999px;top:211.50px;line-height:10px;font-size:5.8px;color:#1a1a1a;">VerdeckteKanten</div>
<svg style="position:absolute;left:788.05px;top:213.20px" width="4.9" height="6.2" viewBox="0 0 6 7.6"><path d="M3 0.5C1.5 0.5 0.7 1.5 0.7 2.6C0.7 3.6 1.6 4.2 1.9 5H4.1C4.4 4.2 5.3 3.6 5.3 2.6C5.3 1.5 4.5 0.5 3 0.5Z" fill="#fdf7a0" stroke="#5f5a18" stroke-width="0.75"/><path d="M2 5.8H4M2.2 6.8H3.8" stroke="#444" stroke-width="0.7"/></svg>
<svg style="position:absolute;left:796.40px;top:213.00px" width="6.2" height="6.7" viewBox="0 0 7 7.6"><path d="M3.6 3.6V2C3.6 0.2 6.3 0.2 6.3 2V2.6" fill="none" stroke="#555" stroke-width="0.7"/><rect x="0.6" y="3.5" width="4.6" height="3.5" fill="#f2e24a" stroke="#6a6210" stroke-width="0.55"/></svg>
<svg style="position:absolute;left:802px;top:211px" width="11" height="11" viewBox="0 0 11 11"><rect x="2.6" y="2.65" width="5.6" height="5.7" fill="#000" stroke="none" stroke-width="0.6"/></svg>
<div class="t" style="left:852px;top:211.50px;line-height:10px;font-size:5.8px;color:#1a1a1a;">Ausgeblendet</div>
<svg style="position:absolute;left:889.8px;top:212.90px" width="7.2" height="7.2" viewBox="0 0 7.2 7.2"><path d="M3.6 0.7L6.5 3.6L3.6 6.5L0.7 3.6Z" fill="#000" stroke="#000" stroke-width="0.45"/></svg>
<div class="t" style="left:899px;top:211.50px;line-height:10px;font-size:5.8px;color:#1a1a1a;">0.35</div>
<div class="t" style="left:687.0999999999999px;top:220.70px;line-height:10px;font-size:5.8px;color:#1a1a1a;">DarüberligendeKanten</div>
<svg style="position:absolute;left:788.05px;top:222.40px" width="4.9" height="6.2" viewBox="0 0 6 7.6"><path d="M3 0.5C1.5 0.5 0.7 1.5 0.7 2.6C0.7 3.6 1.6 4.2 1.9 5H4.1C4.4 4.2 5.3 3.6 5.3 2.6C5.3 1.5 4.5 0.5 3 0.5Z" fill="#fdf7a0" stroke="#5f5a18" stroke-width="0.75"/><path d="M2 5.8H4M2.2 6.8H3.8" stroke="#444" stroke-width="0.7"/></svg>
<svg style="position:absolute;left:796.40px;top:222.20px" width="6.2" height="6.7" viewBox="0 0 7 7.6"><path d="M3.6 3.6V2C3.6 0.2 6.3 0.2 6.3 2V2.6" fill="none" stroke="#555" stroke-width="0.7"/><rect x="0.6" y="3.5" width="4.6" height="3.5" fill="#f2e24a" stroke="#6a6210" stroke-width="0.55"/></svg>
<svg style="position:absolute;left:802px;top:220px" width="11" height="11" viewBox="0 0 11 11"><rect x="2.6" y="2.85" width="5.6" height="5.7" fill="#000" stroke="none" stroke-width="0.6"/></svg>
<div class="t" style="left:852px;top:220.70px;line-height:10px;font-size:5.8px;color:#1a1a1a;">Beschriftun...</div>
<svg style="position:absolute;left:889.8px;top:222.10px" width="7.2" height="7.2" viewBox="0 0 7.2 7.2"><path d="M3.6 0.7L6.5 3.6L3.6 6.5L0.7 3.6Z" fill="#000" stroke="#000" stroke-width="0.45"/></svg>
<div class="t" style="left:899px;top:220.70px;line-height:10px;font-size:5.8px;color:#1a1a1a;">0.5</div>
<div class="t" style="left:687.0999999999999px;top:229.90px;line-height:10px;font-size:5.8px;color:#1a1a1a;">AnsichtsKanten</div>
<svg style="position:absolute;left:788.05px;top:231.60px" width="4.9" height="6.2" viewBox="0 0 6 7.6"><path d="M3 0.5C1.5 0.5 0.7 1.5 0.7 2.6C0.7 3.6 1.6 4.2 1.9 5H4.1C4.4 4.2 5.3 3.6 5.3 2.6C5.3 1.5 4.5 0.5 3 0.5Z" fill="#fdf7a0" stroke="#5f5a18" stroke-width="0.75"/><path d="M2 5.8H4M2.2 6.8H3.8" stroke="#444" stroke-width="0.7"/></svg>
<svg style="position:absolute;left:796.40px;top:231.40px" width="6.2" height="6.7" viewBox="0 0 7 7.6"><path d="M3.6 3.6V2C3.6 0.2 6.3 0.2 6.3 2V2.6" fill="none" stroke="#555" stroke-width="0.7"/><rect x="0.6" y="3.5" width="4.6" height="3.5" fill="#f2e24a" stroke="#6a6210" stroke-width="0.55"/></svg>
<svg style="position:absolute;left:802px;top:229px" width="11" height="11" viewBox="0 0 11 11"><rect x="2.6" y="3.05" width="5.6" height="5.7" fill="#0a0ae0" stroke="none" stroke-width="0.6"/></svg>
<div class="t" style="left:852px;top:229.90px;line-height:10px;font-size:5.8px;color:#1a1a1a;">Durchgehend</div>
<svg style="position:absolute;left:889.8px;top:231.30px" width="7.2" height="7.2" viewBox="0 0 7.2 7.2"><path d="M3.6 0.7L6.5 3.6L3.6 6.5L0.7 3.6Z" fill="#1a1ad0" stroke="#1a1ad0" stroke-width="0.45"/></svg>
<div class="t" style="left:899px;top:229.90px;line-height:10px;font-size:5.8px;color:#1a1a1a;">0.35</div>
<div class="t" style="left:687.0999999999999px;top:239.10px;line-height:10px;font-size:5.8px;color:#1a1a1a;">GeschnitteneKanten - 1zu50</div>
<svg style="position:absolute;left:788.05px;top:240.80px" width="4.9" height="6.2" viewBox="0 0 6 7.6"><path d="M3 0.5C1.5 0.5 0.7 1.5 0.7 2.6C0.7 3.6 1.6 4.2 1.9 5H4.1C4.4 4.2 5.3 3.6 5.3 2.6C5.3 1.5 4.5 0.5 3 0.5Z" fill="#fdf7a0" stroke="#5f5a18" stroke-width="0.75"/><path d="M2 5.8H4M2.2 6.8H3.8" stroke="#444" stroke-width="0.7"/></svg>
<svg style="position:absolute;left:796.40px;top:240.60px" width="6.2" height="6.7" viewBox="0 0 7 7.6"><path d="M3.6 3.6V2C3.6 0.2 6.3 0.2 6.3 2V2.6" fill="none" stroke="#555" stroke-width="0.7"/><rect x="0.6" y="3.5" width="4.6" height="3.5" fill="#f2e24a" stroke="#6a6210" stroke-width="0.55"/></svg>
<svg style="position:absolute;left:802px;top:239px" width="11" height="11" viewBox="0 0 11 11"><rect x="2.6" y="2.25" width="5.6" height="5.7" fill="#e80a0a" stroke="none" stroke-width="0.6"/></svg>
<div class="t" style="left:852px;top:239.10px;line-height:10px;font-size:5.8px;color:#1a1a1a;">Durchgehend</div>
<svg style="position:absolute;left:889.8px;top:240.50px" width="7.2" height="7.2" viewBox="0 0 7.2 7.2"><path d="M3.6 0.7L6.5 3.6L3.6 6.5L0.7 3.6Z" fill="#000" stroke="#000" stroke-width="0.45"/></svg>
<div class="t" style="left:899px;top:239.10px;line-height:10px;font-size:5.8px;color:#1a1a1a;">0.5</div>
<div class="t" style="left:687.0999999999999px;top:248.30px;line-height:10px;font-size:5.8px;color:#1a1a1a;">AnsichtsKanten - 1zu50</div>
<svg style="position:absolute;left:788.05px;top:250.00px" width="4.9" height="6.2" viewBox="0 0 6 7.6"><path d="M3 0.5C1.5 0.5 0.7 1.5 0.7 2.6C0.7 3.6 1.6 4.2 1.9 5H4.1C4.4 4.2 5.3 3.6 5.3 2.6C5.3 1.5 4.5 0.5 3 0.5Z" fill="#fdf7a0" stroke="#5f5a18" stroke-width="0.75"/><path d="M2 5.8H4M2.2 6.8H3.8" stroke="#444" stroke-width="0.7"/></svg>
<svg style="position:absolute;left:796.40px;top:249.80px" width="6.2" height="6.7" viewBox="0 0 7 7.6"><path d="M3.6 3.6V2C3.6 0.2 6.3 0.2 6.3 2V2.6" fill="none" stroke="#555" stroke-width="0.7"/><rect x="0.6" y="3.5" width="4.6" height="3.5" fill="#f2e24a" stroke="#6a6210" stroke-width="0.55"/></svg>
<svg style="position:absolute;left:802px;top:248px" width="11" height="11" viewBox="0 0 11 11"><rect x="2.6" y="2.45" width="5.6" height="5.7" fill="#0a0ae0" stroke="none" stroke-width="0.6"/></svg>
<div class="t" style="left:852px;top:248.30px;line-height:10px;font-size:5.8px;color:#1a1a1a;">Durchgehend</div>
<svg style="position:absolute;left:889.8px;top:249.70px" width="7.2" height="7.2" viewBox="0 0 7.2 7.2"><path d="M3.6 0.7L6.5 3.6L3.6 6.5L0.7 3.6Z" fill="#1a1ad0" stroke="#1a1ad0" stroke-width="0.45"/></svg>
<div class="t" style="left:899px;top:248.30px;line-height:10px;font-size:5.8px;color:#1a1a1a;">0.35</div>
<div class="t" style="left:687.0999999999999px;top:257.50px;line-height:10px;font-size:5.8px;color:#1a1a1a;">AnsichtsKanten fein - 1zu50</div>
<svg style="position:absolute;left:788.05px;top:259.20px" width="4.9" height="6.2" viewBox="0 0 6 7.6"><path d="M3 0.5C1.5 0.5 0.7 1.5 0.7 2.6C0.7 3.6 1.6 4.2 1.9 5H4.1C4.4 4.2 5.3 3.6 5.3 2.6C5.3 1.5 4.5 0.5 3 0.5Z" fill="#fdf7a0" stroke="#5f5a18" stroke-width="0.75"/><path d="M2 5.8H4M2.2 6.8H3.8" stroke="#444" stroke-width="0.7"/></svg>
<svg style="position:absolute;left:796.40px;top:259.00px" width="6.2" height="6.7" viewBox="0 0 7 7.6"><path d="M3.6 3.6V2C3.6 0.2 6.3 0.2 6.3 2V2.6" fill="none" stroke="#555" stroke-width="0.7"/><rect x="0.6" y="3.5" width="4.6" height="3.5" fill="#f2e24a" stroke="#6a6210" stroke-width="0.55"/></svg>
<svg style="position:absolute;left:802px;top:257px" width="11" height="11" viewBox="0 0 11 11"><rect x="2.6" y="2.65" width="5.6" height="5.7" fill="#28b4f0" stroke="none" stroke-width="0.6"/></svg>
<div class="t" style="left:852px;top:257.50px;line-height:10px;font-size:5.8px;color:#1a1a1a;">Durchgehend</div>
<svg style="position:absolute;left:889.8px;top:258.90px" width="7.2" height="7.2" viewBox="0 0 7.2 7.2"><path d="M3.6 0.7L6.5 3.6L3.6 6.5L0.7 3.6Z" fill="#28a0e0" stroke="#28a0e0" stroke-width="0.45"/></svg>
<div class="t" style="left:899px;top:257.50px;line-height:10px;font-size:5.8px;color:#1a1a1a;">0.25</div>
<div class="t" style="left:687.0999999999999px;top:266.70px;line-height:10px;font-size:5.8px;color:#1a1a1a;">Schraffuren_1zu100</div>
<svg style="position:absolute;left:788.05px;top:268.40px" width="4.9" height="6.2" viewBox="0 0 6 7.6"><path d="M3 0.5C1.5 0.5 0.7 1.5 0.7 2.6C0.7 3.6 1.6 4.2 1.9 5H4.1C4.4 4.2 5.3 3.6 5.3 2.6C5.3 1.5 4.5 0.5 3 0.5Z" fill="#fdf7a0" stroke="#5f5a18" stroke-width="0.75"/><path d="M2 5.8H4M2.2 6.8H3.8" stroke="#444" stroke-width="0.7"/></svg>
<svg style="position:absolute;left:796.40px;top:268.20px" width="6.2" height="6.7" viewBox="0 0 7 7.6"><path d="M3.6 3.6V2C3.6 0.2 6.3 0.2 6.3 2V2.6" fill="none" stroke="#555" stroke-width="0.7"/><rect x="0.6" y="3.5" width="4.6" height="3.5" fill="#f2e24a" stroke="#6a6210" stroke-width="0.55"/></svg>
<svg style="position:absolute;left:802px;top:266px" width="11" height="11" viewBox="0 0 11 11"><rect x="2.6" y="2.85" width="5.6" height="5.7" fill="#000" stroke="none" stroke-width="0.6"/></svg>
<div class="t" style="left:852px;top:266.70px;line-height:10px;font-size:5.8px;color:#1a1a1a;">Durchgehend</div>
<svg style="position:absolute;left:889.8px;top:268.10px" width="7.2" height="7.2" viewBox="0 0 7.2 7.2"><path d="M3.6 0.7L6.5 3.6L3.6 6.5L0.7 3.6Z" fill="#000" stroke="#000" stroke-width="0.45"/></svg>
<div class="t" style="left:899px;top:266.70px;line-height:10px;font-size:5.8px;color:#1a1a1a;">Standard</div>
<div class="t" style="left:687.0999999999999px;top:275.90px;line-height:10px;font-size:5.8px;color:#1a1a1a;">Bemassungen_1zu100</div>
<svg style="position:absolute;left:788.05px;top:277.60px" width="4.9" height="6.2" viewBox="0 0 6 7.6"><path d="M3 0.5C1.5 0.5 0.7 1.5 0.7 2.6C0.7 3.6 1.6 4.2 1.9 5H4.1C4.4 4.2 5.3 3.6 5.3 2.6C5.3 1.5 4.5 0.5 3 0.5Z" fill="#fdf7a0" stroke="#5f5a18" stroke-width="0.75"/><path d="M2 5.8H4M2.2 6.8H3.8" stroke="#444" stroke-width="0.7"/></svg>
<svg style="position:absolute;left:796.40px;top:277.40px" width="6.2" height="6.7" viewBox="0 0 7 7.6"><path d="M3.6 3.6V2C3.6 0.2 6.3 0.2 6.3 2V2.6" fill="none" stroke="#555" stroke-width="0.7"/><rect x="0.6" y="3.5" width="4.6" height="3.5" fill="#f2e24a" stroke="#6a6210" stroke-width="0.55"/></svg>
<svg style="position:absolute;left:802px;top:275px" width="11" height="11" viewBox="0 0 11 11"><rect x="2.6" y="3.05" width="5.6" height="5.7" fill="#000" stroke="none" stroke-width="0.6"/></svg>
<div class="t" style="left:852px;top:275.90px;line-height:10px;font-size:5.8px;color:#1a1a1a;">Durchgehend</div>
<svg style="position:absolute;left:889.8px;top:277.30px" width="7.2" height="7.2" viewBox="0 0 7.2 7.2"><path d="M3.6 0.7L6.5 3.6L3.6 6.5L0.7 3.6Z" fill="#000" stroke="#000" stroke-width="0.45"/></svg>
<div class="t" style="left:899px;top:275.90px;line-height:10px;font-size:5.8px;color:#1a1a1a;">Standard</div>
<div class="t" style="left:687.0999999999999px;top:285.10px;line-height:10px;font-size:5.8px;color:#1a1a1a;">Bemassungen_1zu20</div>
<svg style="position:absolute;left:788.05px;top:286.80px" width="4.9" height="6.2" viewBox="0 0 6 7.6"><path d="M3 0.5C1.5 0.5 0.7 1.5 0.7 2.6C0.7 3.6 1.6 4.2 1.9 5H4.1C4.4 4.2 5.3 3.6 5.3 2.6C5.3 1.5 4.5 0.5 3 0.5Z" fill="#fdf7a0" stroke="#5f5a18" stroke-width="0.75"/><path d="M2 5.8H4M2.2 6.8H3.8" stroke="#444" stroke-width="0.7"/></svg>
<svg style="position:absolute;left:796.40px;top:286.60px" width="6.2" height="6.7" viewBox="0 0 7 7.6"><path d="M3.6 3.6V2C3.6 0.2 6.3 0.2 6.3 2V2.6" fill="none" stroke="#555" stroke-width="0.7"/><rect x="0.6" y="3.5" width="4.6" height="3.5" fill="#f2e24a" stroke="#6a6210" stroke-width="0.55"/></svg>
<svg style="position:absolute;left:802px;top:285px" width="11" height="11" viewBox="0 0 11 11"><rect x="2.6" y="2.25" width="5.6" height="5.7" fill="#000" stroke="none" stroke-width="0.6"/></svg>
<div class="t" style="left:852px;top:285.10px;line-height:10px;font-size:5.8px;color:#1a1a1a;">Durchgehend</div>
<svg style="position:absolute;left:889.8px;top:286.50px" width="7.2" height="7.2" viewBox="0 0 7.2 7.2"><path d="M3.6 0.7L6.5 3.6L3.6 6.5L0.7 3.6Z" fill="#000" stroke="#000" stroke-width="0.45"/></svg>
<div class="t" style="left:899px;top:285.10px;line-height:10px;font-size:5.8px;color:#1a1a1a;">Standard</div>
<div class="t" style="left:687.0999999999999px;top:294.30px;line-height:10px;font-size:5.8px;color:#1a1a1a;">1zu50</div>
<svg style="position:absolute;left:788.05px;top:296.00px" width="4.9" height="6.2" viewBox="0 0 6 7.6"><path d="M3 0.5C1.5 0.5 0.7 1.5 0.7 2.6C0.7 3.6 1.6 4.2 1.9 5H4.1C4.4 4.2 5.3 3.6 5.3 2.6C5.3 1.5 4.5 0.5 3 0.5Z" fill="#fdf7a0" stroke="#5f5a18" stroke-width="0.75"/><path d="M2 5.8H4M2.2 6.8H3.8" stroke="#444" stroke-width="0.7"/></svg>
<svg style="position:absolute;left:796.40px;top:295.80px" width="6.2" height="6.7" viewBox="0 0 7 7.6"><path d="M3.6 3.6V2C3.6 0.2 6.3 0.2 6.3 2V2.6" fill="none" stroke="#555" stroke-width="0.7"/><rect x="0.6" y="3.5" width="4.6" height="3.5" fill="#f2e24a" stroke="#6a6210" stroke-width="0.55"/></svg>
<svg style="position:absolute;left:802px;top:294px" width="11" height="11" viewBox="0 0 11 11"><rect x="2.6" y="2.45" width="5.6" height="5.7" fill="#000" stroke="none" stroke-width="0.6"/></svg>
<div class="t" style="left:852px;top:294.30px;line-height:10px;font-size:5.8px;color:#1a1a1a;">Durchgehend</div>
<svg style="position:absolute;left:889.8px;top:295.70px" width="7.2" height="7.2" viewBox="0 0 7.2 7.2"><path d="M3.6 0.7L6.5 3.6L3.6 6.5L0.7 3.6Z" fill="#000" stroke="#000" stroke-width="0.45"/></svg>
<div class="t" style="left:899px;top:294.30px;line-height:10px;font-size:5.8px;color:#1a1a1a;">Standard</div>
<div class="t" style="left:671.3px;top:303.50px;line-height:10px;font-size:5.8px;color:#1a1a1a;">Ansicht_Volumenmodell</div>
<svg style="position:absolute;left:662.90px;top:306.50px" width="5" height="4" viewBox="0 0 5 4"><path d="M0.6 0.8L2.5 2.8L4.4 0.8" fill="none" stroke="#444" stroke-width="0.7"/></svg>
<svg style="position:absolute;left:788.05px;top:305.20px" width="4.9" height="6.2" viewBox="0 0 6 7.6"><path d="M3 0.5C1.5 0.5 0.7 1.5 0.7 2.6C0.7 3.6 1.6 4.2 1.9 5H4.1C4.4 4.2 5.3 3.6 5.3 2.6C5.3 1.5 4.5 0.5 3 0.5Z" fill="#6a8fe0" stroke="#2a3f90" stroke-width="0.75"/><path d="M2 5.8H4M2.2 6.8H3.8" stroke="#444" stroke-width="0.7"/></svg>
<svg style="position:absolute;left:796.40px;top:305.00px" width="6.2" height="6.7" viewBox="0 0 7 7.6"><path d="M3.6 3.6V2C3.6 0.2 6.3 0.2 6.3 2V2.6" fill="none" stroke="#555" stroke-width="0.7"/><rect x="0.6" y="3.5" width="4.6" height="3.5" fill="#f2e24a" stroke="#6a6210" stroke-width="0.55"/></svg>
<svg style="position:absolute;left:802px;top:303px" width="11" height="11" viewBox="0 0 11 11"><rect x="2.6" y="2.65" width="5.6" height="5.7" fill="#000" stroke="none" stroke-width="0.6"/></svg>
<div class="t" style="left:852px;top:303.50px;line-height:10px;font-size:5.8px;color:#1a1a1a;">Durchgehend</div>
<svg style="position:absolute;left:889.8px;top:304.90px" width="7.2" height="7.2" viewBox="0 0 7.2 7.2"><path d="M3.6 0.7L6.5 3.6L3.6 6.5L0.7 3.6Z" fill="#000" stroke="#000" stroke-width="0.45"/></svg>
<div class="t" style="left:899px;top:303.50px;line-height:10px;font-size:5.8px;color:#1a1a1a;">Standard</div>
<div class="t" style="left:679.1999999999999px;top:312.70px;line-height:10px;font-size:5.8px;color:#1a1a1a;">Schraffuren</div>
<svg style="position:absolute;left:788.05px;top:314.40px" width="4.9" height="6.2" viewBox="0 0 6 7.6"><path d="M3 0.5C1.5 0.5 0.7 1.5 0.7 2.6C0.7 3.6 1.6 4.2 1.9 5H4.1C4.4 4.2 5.3 3.6 5.3 2.6C5.3 1.5 4.5 0.5 3 0.5Z" fill="#dfe6f6" stroke="#5a6a9a" stroke-width="0.75"/><path d="M2 5.8H4M2.2 6.8H3.8" stroke="#444" stroke-width="0.7"/></svg>
<svg style="position:absolute;left:796.40px;top:314.20px" width="6.2" height="6.7" viewBox="0 0 7 7.6"><path d="M3.6 3.6V2C3.6 0.2 6.3 0.2 6.3 2V2.6" fill="none" stroke="#555" stroke-width="0.7"/><rect x="0.6" y="3.5" width="4.6" height="3.5" fill="#f2e24a" stroke="#6a6210" stroke-width="0.55"/></svg>
<svg style="position:absolute;left:802px;top:312px" width="11" height="11" viewBox="0 0 11 11"><rect x="2.6" y="2.85" width="5.6" height="5.7" fill="#000" stroke="none" stroke-width="0.6"/></svg>
<div class="t" style="left:852px;top:312.70px;line-height:10px;font-size:5.8px;color:#1a1a1a;">Durchgehend</div>
<svg style="position:absolute;left:889.8px;top:314.10px" width="7.2" height="7.2" viewBox="0 0 7.2 7.2"><path d="M3.6 0.7L6.5 3.6L3.6 6.5L0.7 3.6Z" fill="#000" stroke="#000" stroke-width="0.45"/></svg>
<div class="t" style="left:899px;top:312.70px;line-height:10px;font-size:5.8px;color:#1a1a1a;">Standard</div>
<div class="t" style="left:679.1999999999999px;top:321.90px;line-height:10px;font-size:5.8px;color:#1a1a1a;">Schatten</div>
<svg style="position:absolute;left:788.05px;top:323.60px" width="4.9" height="6.2" viewBox="0 0 6 7.6"><path d="M3 0.5C1.5 0.5 0.7 1.5 0.7 2.6C0.7 3.6 1.6 4.2 1.9 5H4.1C4.4 4.2 5.3 3.6 5.3 2.6C5.3 1.5 4.5 0.5 3 0.5Z" fill="#dfe6f6" stroke="#5a6a9a" stroke-width="0.75"/><path d="M2 5.8H4M2.2 6.8H3.8" stroke="#444" stroke-width="0.7"/></svg>
<svg style="position:absolute;left:796.40px;top:323.40px" width="6.2" height="6.7" viewBox="0 0 7 7.6"><path d="M3.6 3.6V2C3.6 0.2 6.3 0.2 6.3 2V2.6" fill="none" stroke="#555" stroke-width="0.7"/><rect x="0.6" y="3.5" width="4.6" height="3.5" fill="#f2e24a" stroke="#6a6210" stroke-width="0.55"/></svg>
<svg style="position:absolute;left:802px;top:321px" width="11" height="11" viewBox="0 0 11 11"><rect x="2.6" y="3.05" width="5.6" height="5.7" fill="#808080" stroke="#444" stroke-width="0.6"/></svg>
<div class="t" style="left:852px;top:321.90px;line-height:10px;font-size:5.8px;color:#1a1a1a;">Durchgehend</div>
<svg style="position:absolute;left:889.8px;top:323.30px" width="7.2" height="7.2" viewBox="0 0 7.2 7.2"><path d="M3.6 0.7L6.5 3.6L3.6 6.5L0.7 3.6Z" fill="#808080" stroke="#333" stroke-width="0.45"/></svg>
<div class="t" style="left:899px;top:321.90px;line-height:10px;font-size:5.8px;color:#1a1a1a;">Standard</div>
<div class="t" style="left:679.1999999999999px;top:331.10px;line-height:10px;font-size:5.8px;color:#1a1a1a;">Bemassung</div>
<svg style="position:absolute;left:670.80px;top:334.10px" width="5" height="4" viewBox="0 0 5 4"><path d="M0.6 0.8L2.5 2.8L4.4 0.8" fill="none" stroke="#444" stroke-width="0.7"/></svg>
<svg style="position:absolute;left:788.05px;top:332.80px" width="4.9" height="6.2" viewBox="0 0 6 7.6"><path d="M3 0.5C1.5 0.5 0.7 1.5 0.7 2.6C0.7 3.6 1.6 4.2 1.9 5H4.1C4.4 4.2 5.3 3.6 5.3 2.6C5.3 1.5 4.5 0.5 3 0.5Z" fill="#dfe6f6" stroke="#5a6a9a" stroke-width="0.75"/><path d="M2 5.8H4M2.2 6.8H3.8" stroke="#444" stroke-width="0.7"/></svg>
<svg style="position:absolute;left:796.40px;top:332.60px" width="6.2" height="6.7" viewBox="0 0 7 7.6"><path d="M3.6 3.6V2C3.6 0.2 6.3 0.2 6.3 2V2.6" fill="none" stroke="#555" stroke-width="0.7"/><rect x="0.6" y="3.5" width="4.6" height="3.5" fill="#f2e24a" stroke="#6a6210" stroke-width="0.55"/></svg>
<svg style="position:absolute;left:802px;top:331px" width="11" height="11" viewBox="0 0 11 11"><rect x="2.6" y="2.25" width="5.6" height="5.7" fill="#000" stroke="none" stroke-width="0.6"/></svg>
<div class="t" style="left:852px;top:331.10px;line-height:10px;font-size:5.8px;color:#1a1a1a;">Durchgehend</div>
<svg style="position:absolute;left:889.8px;top:332.50px" width="7.2" height="7.2" viewBox="0 0 7.2 7.2"><path d="M3.6 0.7L6.5 3.6L3.6 6.5L0.7 3.6Z" fill="#000" stroke="#000" stroke-width="0.45"/></svg>
<div class="t" style="left:899px;top:331.10px;line-height:10px;font-size:5.8px;color:#1a1a1a;">Standard</div>
<div class="t" style="left:687.0999999999999px;top:340.30px;line-height:10px;font-size:5.8px;color:#1a1a1a;">1zu100</div>
<svg style="position:absolute;left:788.05px;top:342.00px" width="4.9" height="6.2" viewBox="0 0 6 7.6"><path d="M3 0.5C1.5 0.5 0.7 1.5 0.7 2.6C0.7 3.6 1.6 4.2 1.9 5H4.1C4.4 4.2 5.3 3.6 5.3 2.6C5.3 1.5 4.5 0.5 3 0.5Z" fill="#dfe6f6" stroke="#5a6a9a" stroke-width="0.75"/><path d="M2 5.8H4M2.2 6.8H3.8" stroke="#444" stroke-width="0.7"/></svg>
<svg style="position:absolute;left:796.40px;top:341.80px" width="6.2" height="6.7" viewBox="0 0 7 7.6"><path d="M3.6 3.6V2C3.6 0.2 6.3 0.2 6.3 2V2.6" fill="none" stroke="#555" stroke-width="0.7"/><rect x="0.6" y="3.5" width="4.6" height="3.5" fill="#f2e24a" stroke="#6a6210" stroke-width="0.55"/></svg>
<svg style="position:absolute;left:802px;top:340px" width="11" height="11" viewBox="0 0 11 11"><rect x="2.6" y="2.45" width="5.6" height="5.7" fill="#000" stroke="none" stroke-width="0.6"/></svg>
<div class="t" style="left:852px;top:340.30px;line-height:10px;font-size:5.8px;color:#1a1a1a;">Durchgehend</div>
<svg style="position:absolute;left:889.8px;top:341.70px" width="7.2" height="7.2" viewBox="0 0 7.2 7.2"><path d="M3.6 0.7L6.5 3.6L3.6 6.5L0.7 3.6Z" fill="#000" stroke="#000" stroke-width="0.45"/></svg>
<div class="t" style="left:899px;top:340.30px;line-height:10px;font-size:5.8px;color:#1a1a1a;">Standard</div>
<div class="t" style="left:679.1999999999999px;top:349.50px;line-height:10px;font-size:5.8px;color:#1a1a1a;">Sichtbar</div>
<svg style="position:absolute;left:670.80px;top:352.50px" width="5" height="4" viewBox="0 0 5 4"><path d="M0.6 0.8L2.5 2.8L4.4 0.8" fill="none" stroke="#444" stroke-width="0.7"/></svg>
<svg style="position:absolute;left:788.05px;top:351.20px" width="4.9" height="6.2" viewBox="0 0 6 7.6"><path d="M3 0.5C1.5 0.5 0.7 1.5 0.7 2.6C0.7 3.6 1.6 4.2 1.9 5H4.1C4.4 4.2 5.3 3.6 5.3 2.6C5.3 1.5 4.5 0.5 3 0.5Z" fill="#dfe6f6" stroke="#5a6a9a" stroke-width="0.75"/><path d="M2 5.8H4M2.2 6.8H3.8" stroke="#444" stroke-width="0.7"/></svg>
<svg style="position:absolute;left:796.40px;top:351.00px" width="6.2" height="6.7" viewBox="0 0 7 7.6"><path d="M3.6 3.6V2C3.6 0.2 6.3 0.2 6.3 2V2.6" fill="none" stroke="#555" stroke-width="0.7"/><rect x="0.6" y="3.5" width="4.6" height="3.5" fill="#f2e24a" stroke="#6a6210" stroke-width="0.55"/></svg>
<svg style="position:absolute;left:802px;top:349px" width="11" height="11" viewBox="0 0 11 11"><rect x="2.6" y="2.65" width="5.6" height="5.7" fill="#000" stroke="none" stroke-width="0.6"/></svg>
<div class="t" style="left:852px;top:349.50px;line-height:10px;font-size:5.8px;color:#1a1a1a;">Durchgehend</div>
<svg style="position:absolute;left:889.8px;top:350.90px" width="7.2" height="7.2" viewBox="0 0 7.2 7.2"><path d="M3.6 0.7L6.5 3.6L3.6 6.5L0.7 3.6Z" fill="#000" stroke="#000" stroke-width="0.45"/></svg>
<div class="t" style="left:899px;top:349.50px;line-height:10px;font-size:5.8px;color:#1a1a1a;">0.35</div>
<div class="t" style="left:687.0999999999999px;top:358.70px;line-height:10px;font-size:5.8px;color:#1a1a1a;">Szenensilhouettenkurven</div>
<svg style="position:absolute;left:788.05px;top:360.40px" width="4.9" height="6.2" viewBox="0 0 6 7.6"><path d="M3 0.5C1.5 0.5 0.7 1.5 0.7 2.6C0.7 3.6 1.6 4.2 1.9 5H4.1C4.4 4.2 5.3 3.6 5.3 2.6C5.3 1.5 4.5 0.5 3 0.5Z" fill="#dfe6f6" stroke="#5a6a9a" stroke-width="0.75"/><path d="M2 5.8H4M2.2 6.8H3.8" stroke="#444" stroke-width="0.7"/></svg>
<svg style="position:absolute;left:796.40px;top:360.20px" width="6.2" height="6.7" viewBox="0 0 7 7.6"><path d="M3.6 3.6V2C3.6 0.2 6.3 0.2 6.3 2V2.6" fill="none" stroke="#555" stroke-width="0.7"/><rect x="0.6" y="3.5" width="4.6" height="3.5" fill="#f2e24a" stroke="#6a6210" stroke-width="0.55"/></svg>
<svg style="position:absolute;left:802px;top:358px" width="11" height="11" viewBox="0 0 11 11"><rect x="2.6" y="2.85" width="5.6" height="5.7" fill="#000" stroke="none" stroke-width="0.6"/></svg>
<div class="t" style="left:852px;top:358.70px;line-height:10px;font-size:5.8px;color:#1a1a1a;">Durchgehend</div>
<svg style="position:absolute;left:889.8px;top:360.10px" width="7.2" height="7.2" viewBox="0 0 7.2 7.2"><path d="M3.6 0.7L6.5 3.6L3.6 6.5L0.7 3.6Z" fill="#000" stroke="#000" stroke-width="0.45"/></svg>
<div class="t" style="left:899px;top:358.70px;line-height:10px;font-size:5.8px;color:#1a1a1a;">0.5</div>
<div class="t" style="left:687.0999999999999px;top:367.90px;line-height:10px;font-size:5.8px;color:#1a1a1a;">Kurven</div>
<svg style="position:absolute;left:788.05px;top:369.60px" width="4.9" height="6.2" viewBox="0 0 6 7.6"><path d="M3 0.5C1.5 0.5 0.7 1.5 0.7 2.6C0.7 3.6 1.6 4.2 1.9 5H4.1C4.4 4.2 5.3 3.6 5.3 2.6C5.3 1.5 4.5 0.5 3 0.5Z" fill="#dfe6f6" stroke="#5a6a9a" stroke-width="0.75"/><path d="M2 5.8H4M2.2 6.8H3.8" stroke="#444" stroke-width="0.7"/></svg>
<svg style="position:absolute;left:796.40px;top:369.40px" width="6.2" height="6.7" viewBox="0 0 7 7.6"><path d="M3.6 3.6V2C3.6 0.2 6.3 0.2 6.3 2V2.6" fill="none" stroke="#555" stroke-width="0.7"/><rect x="0.6" y="3.5" width="4.6" height="3.5" fill="#f2e24a" stroke="#6a6210" stroke-width="0.55"/></svg>
<svg style="position:absolute;left:802px;top:367px" width="11" height="11" viewBox="0 0 11 11"><rect x="2.6" y="3.05" width="5.6" height="5.7" fill="#000" stroke="none" stroke-width="0.6"/></svg>
<div class="t" style="left:852px;top:367.90px;line-height:10px;font-size:5.8px;color:#1a1a1a;">Durchgehend</div>
<svg style="position:absolute;left:889.8px;top:369.30px" width="7.2" height="7.2" viewBox="0 0 7.2 7.2"><path d="M3.6 0.7L6.5 3.6L3.6 6.5L0.7 3.6Z" fill="#000" stroke="#000" stroke-width="0.45"/></svg>
<div class="t" style="left:899px;top:367.90px;line-height:10px;font-size:5.8px;color:#1a1a1a;">0.35</div>
<div class="t" style="left:679.1999999999999px;top:377.10px;line-height:10px;font-size:5.8px;color:#1a1a1a;">Ausgeblendet</div>
<svg style="position:absolute;left:670.80px;top:380.10px" width="5" height="4" viewBox="0 0 5 4"><path d="M0.6 0.8L2.5 2.8L4.4 0.8" fill="none" stroke="#444" stroke-width="0.7"/></svg>
<svg style="position:absolute;left:788.05px;top:378.80px" width="4.9" height="6.2" viewBox="0 0 6 7.6"><path d="M3 0.5C1.5 0.5 0.7 1.5 0.7 2.6C0.7 3.6 1.6 4.2 1.9 5H4.1C4.4 4.2 5.3 3.6 5.3 2.6C5.3 1.5 4.5 0.5 3 0.5Z" fill="#6a8fe0" stroke="#2a3f90" stroke-width="0.75"/><path d="M2 5.8H4M2.2 6.8H3.8" stroke="#444" stroke-width="0.7"/></svg>
<svg style="position:absolute;left:796.40px;top:378.60px" width="6.2" height="6.7" viewBox="0 0 7 7.6"><path d="M3.6 3.6V2C3.6 0.2 6.3 0.2 6.3 2V2.6" fill="none" stroke="#555" stroke-width="0.7"/><rect x="0.6" y="3.5" width="4.6" height="3.5" fill="#f2e24a" stroke="#6a6210" stroke-width="0.55"/></svg>
<svg style="position:absolute;left:802px;top:377px" width="11" height="11" viewBox="0 0 11 11"><rect x="2.6" y="2.25" width="5.6" height="5.7" fill="#8c8c8c" stroke="#444" stroke-width="0.6"/></svg>
<div class="t" style="left:852px;top:377.10px;line-height:10px;font-size:5.8px;color:#1a1a1a;">Ausgeblendet</div>
<svg style="position:absolute;left:889.8px;top:378.50px" width="7.2" height="7.2" viewBox="0 0 7.2 7.2"><path d="M3.6 0.7L6.5 3.6L3.6 6.5L0.7 3.6Z" fill="#808080" stroke="#333" stroke-width="0.45"/></svg>
<div class="t" style="left:899px;top:377.10px;line-height:10px;font-size:5.8px;color:#1a1a1a;">Standard</div>
<div class="t" style="left:687.0999999999999px;top:386.30px;line-height:10px;font-size:5.8px;color:#1a1a1a;">Kurven</div>
<svg style="position:absolute;left:788.05px;top:388.00px" width="4.9" height="6.2" viewBox="0 0 6 7.6"><path d="M3 0.5C1.5 0.5 0.7 1.5 0.7 2.6C0.7 3.6 1.6 4.2 1.9 5H4.1C4.4 4.2 5.3 3.6 5.3 2.6C5.3 1.5 4.5 0.5 3 0.5Z" fill="#dfe6f6" stroke="#5a6a9a" stroke-width="0.75"/><path d="M2 5.8H4M2.2 6.8H3.8" stroke="#444" stroke-width="0.7"/></svg>
<svg style="position:absolute;left:796.40px;top:387.80px" width="6.2" height="6.7" viewBox="0 0 7 7.6"><path d="M3.6 3.6V2C3.6 0.2 6.3 0.2 6.3 2V2.6" fill="none" stroke="#555" stroke-width="0.7"/><rect x="0.6" y="3.5" width="4.6" height="3.5" fill="#f2e24a" stroke="#6a6210" stroke-width="0.55"/></svg>
<svg style="position:absolute;left:802px;top:386px" width="11" height="11" viewBox="0 0 11 11"><rect x="2.6" y="2.45" width="5.6" height="5.7" fill="#8c8c8c" stroke="#444" stroke-width="0.6"/></svg>
<div class="t" style="left:852px;top:386.30px;line-height:10px;font-size:5.8px;color:#1a1a1a;">Ausgeblendet</div>
<svg style="position:absolute;left:889.8px;top:387.70px" width="7.2" height="7.2" viewBox="0 0 7.2 7.2"><path d="M3.6 0.7L6.5 3.6L3.6 6.5L0.7 3.6Z" fill="#808080" stroke="#333" stroke-width="0.45"/></svg>
<div class="t" style="left:899px;top:386.30px;line-height:10px;font-size:5.8px;color:#1a1a1a;">0.35</div>
<div class="t" style="left:671.3px;top:395.50px;line-height:10px;font-size:5.8px;color:#1a1a1a;">Vieports</div>
<svg style="position:absolute;left:788.05px;top:397.20px" width="4.9" height="6.2" viewBox="0 0 6 7.6"><path d="M3 0.5C1.5 0.5 0.7 1.5 0.7 2.6C0.7 3.6 1.6 4.2 1.9 5H4.1C4.4 4.2 5.3 3.6 5.3 2.6C5.3 1.5 4.5 0.5 3 0.5Z" fill="#fdf7a0" stroke="#5f5a18" stroke-width="0.75"/><path d="M2 5.8H4M2.2 6.8H3.8" stroke="#444" stroke-width="0.7"/></svg>
<svg style="position:absolute;left:796.40px;top:397.00px" width="6.2" height="6.7" viewBox="0 0 7 7.6"><path d="M3.6 3.6V2C3.6 0.2 6.3 0.2 6.3 2V2.6" fill="none" stroke="#555" stroke-width="0.7"/><rect x="0.6" y="3.5" width="4.6" height="3.5" fill="#f2e24a" stroke="#6a6210" stroke-width="0.55"/></svg>
<svg style="position:absolute;left:802px;top:395px" width="11" height="11" viewBox="0 0 11 11"><rect x="2.6" y="2.65" width="5.6" height="5.7" fill="#fff" stroke="#111" stroke-width="0.6"/></svg>
<div class="t" style="left:852px;top:395.50px;line-height:10px;font-size:5.8px;color:#1a1a1a;">Durchgehend</div>
<svg style="position:absolute;left:889.8px;top:396.90px" width="7.2" height="7.2" viewBox="0 0 7.2 7.2"><path d="M3.6 0.7L6.5 3.6L3.6 6.5L0.7 3.6Z" fill="#fff" stroke="#333" stroke-width="0.45"/></svg>
<div class="t" style="left:899px;top:395.50px;line-height:10px;font-size:5.8px;color:#1a1a1a;">Standard</div>
<div class="t" style="left:671.3px;top:404.70px;line-height:10px;font-size:5.8px;color:#1a1a1a;">Sec</div>
<svg style="position:absolute;left:788.05px;top:406.40px" width="4.9" height="6.2" viewBox="0 0 6 7.6"><path d="M3 0.5C1.5 0.5 0.7 1.5 0.7 2.6C0.7 3.6 1.6 4.2 1.9 5H4.1C4.4 4.2 5.3 3.6 5.3 2.6C5.3 1.5 4.5 0.5 3 0.5Z" fill="#fdf7a0" stroke="#5f5a18" stroke-width="0.75"/><path d="M2 5.8H4M2.2 6.8H3.8" stroke="#444" stroke-width="0.7"/></svg>
<svg style="position:absolute;left:796.40px;top:406.20px" width="6.2" height="6.7" viewBox="0 0 7 7.6"><path d="M3.6 3.6V2C3.6 0.2 6.3 0.2 6.3 2V2.6" fill="none" stroke="#555" stroke-width="0.7"/><rect x="0.6" y="3.5" width="4.6" height="3.5" fill="#f2e24a" stroke="#6a6210" stroke-width="0.55"/></svg>
<svg style="position:absolute;left:802px;top:404px" width="11" height="11" viewBox="0 0 11 11"><rect x="2.6" y="2.85" width="5.6" height="5.7" fill="#000" stroke="none" stroke-width="0.6"/></svg>
<div class="t" style="left:852px;top:404.70px;line-height:10px;font-size:5.8px;color:#1a1a1a;">Durchgehend</div>
<svg style="position:absolute;left:889.8px;top:406.10px" width="7.2" height="7.2" viewBox="0 0 7.2 7.2"><path d="M3.6 0.7L6.5 3.6L3.6 6.5L0.7 3.6Z" fill="#000" stroke="#000" stroke-width="0.45"/></svg>
<div class="t" style="left:899px;top:404.70px;line-height:10px;font-size:5.8px;color:#1a1a1a;">Standard</div>
<div class="t" style="left:671.3px;top:413.90px;line-height:10px;font-size:5.8px;color:#1a1a1a;">Ansicht_Volumenmodell_test</div>
<svg style="position:absolute;left:662.90px;top:416.90px" width="5" height="4" viewBox="0 0 5 4"><path d="M0.6 0.8L2.5 2.8L4.4 0.8" fill="none" stroke="#444" stroke-width="0.7"/></svg>
<svg style="position:absolute;left:788.05px;top:415.60px" width="4.9" height="6.2" viewBox="0 0 6 7.6"><path d="M3 0.5C1.5 0.5 0.7 1.5 0.7 2.6C0.7 3.6 1.6 4.2 1.9 5H4.1C4.4 4.2 5.3 3.6 5.3 2.6C5.3 1.5 4.5 0.5 3 0.5Z" fill="#fdf7a0" stroke="#5f5a18" stroke-width="0.75"/><path d="M2 5.8H4M2.2 6.8H3.8" stroke="#444" stroke-width="0.7"/></svg>
<svg style="position:absolute;left:796.40px;top:415.40px" width="6.2" height="6.7" viewBox="0 0 7 7.6"><path d="M3.6 3.6V2C3.6 0.2 6.3 0.2 6.3 2V2.6" fill="none" stroke="#555" stroke-width="0.7"/><rect x="0.6" y="3.5" width="4.6" height="3.5" fill="#f2e24a" stroke="#6a6210" stroke-width="0.55"/></svg>
<svg style="position:absolute;left:802px;top:413px" width="11" height="11" viewBox="0 0 11 11"><rect x="2.6" y="3.05" width="5.6" height="5.7" fill="#000" stroke="none" stroke-width="0.6"/></svg>
<div class="t" style="left:852px;top:413.90px;line-height:10px;font-size:5.8px;color:#1a1a1a;">Durchgehend</div>
<svg style="position:absolute;left:889.8px;top:415.30px" width="7.2" height="7.2" viewBox="0 0 7.2 7.2"><path d="M3.6 0.7L6.5 3.6L3.6 6.5L0.7 3.6Z" fill="#000" stroke="#000" stroke-width="0.45"/></svg>
<div class="t" style="left:899px;top:413.90px;line-height:10px;font-size:5.8px;color:#1a1a1a;">Standard</div>
<div class="t" style="left:679.1999999999999px;top:423.10px;line-height:10px;font-size:5.8px;color:#1a1a1a;">Sichtbar</div>
<svg style="position:absolute;left:670.80px;top:426.10px" width="5" height="4" viewBox="0 0 5 4"><path d="M0.6 0.8L2.5 2.8L4.4 0.8" fill="none" stroke="#444" stroke-width="0.7"/></svg>
<svg style="position:absolute;left:788.05px;top:424.80px" width="4.9" height="6.2" viewBox="0 0 6 7.6"><path d="M3 0.5C1.5 0.5 0.7 1.5 0.7 2.6C0.7 3.6 1.6 4.2 1.9 5H4.1C4.4 4.2 5.3 3.6 5.3 2.6C5.3 1.5 4.5 0.5 3 0.5Z" fill="#fdf7a0" stroke="#5f5a18" stroke-width="0.75"/><path d="M2 5.8H4M2.2 6.8H3.8" stroke="#444" stroke-width="0.7"/></svg>
<svg style="position:absolute;left:796.40px;top:424.60px" width="6.2" height="6.7" viewBox="0 0 7 7.6"><path d="M3.6 3.6V2C3.6 0.2 6.3 0.2 6.3 2V2.6" fill="none" stroke="#555" stroke-width="0.7"/><rect x="0.6" y="3.5" width="4.6" height="3.5" fill="#f2e24a" stroke="#6a6210" stroke-width="0.55"/></svg>
<svg style="position:absolute;left:802px;top:423px" width="11" height="11" viewBox="0 0 11 11"><rect x="2.6" y="2.25" width="5.6" height="5.7" fill="#000" stroke="none" stroke-width="0.6"/></svg>
<div class="t" style="left:852px;top:423.10px;line-height:10px;font-size:5.8px;color:#1a1a1a;">Durchgehend</div>
<svg style="position:absolute;left:889.8px;top:424.50px" width="7.2" height="7.2" viewBox="0 0 7.2 7.2"><path d="M3.6 0.7L6.5 3.6L3.6 6.5L0.7 3.6Z" fill="#000" stroke="#000" stroke-width="0.45"/></svg>
<div class="t" style="left:899px;top:423.10px;line-height:10px;font-size:5.8px;color:#1a1a1a;">Standard</div>
<div class="t" style="left:687.0999999999999px;top:432.30px;line-height:10px;font-size:5.8px;color:#1a1a1a;">Zuschneideebenenschnitte</div>
<svg style="position:absolute;left:788.05px;top:434.00px" width="4.9" height="6.2" viewBox="0 0 6 7.6"><path d="M3 0.5C1.5 0.5 0.7 1.5 0.7 2.6C0.7 3.6 1.6 4.2 1.9 5H4.1C4.4 4.2 5.3 3.6 5.3 2.6C5.3 1.5 4.5 0.5 3 0.5Z" fill="#fdf7a0" stroke="#5f5a18" stroke-width="0.75"/><path d="M2 5.8H4M2.2 6.8H3.8" stroke="#444" stroke-width="0.7"/></svg>
<svg style="position:absolute;left:796.40px;top:433.80px" width="6.2" height="6.7" viewBox="0 0 7 7.6"><path d="M3.6 3.6V2C3.6 0.2 6.3 0.2 6.3 2V2.6" fill="none" stroke="#555" stroke-width="0.7"/><rect x="0.6" y="3.5" width="4.6" height="3.5" fill="#f2e24a" stroke="#6a6210" stroke-width="0.55"/></svg>
<svg style="position:absolute;left:802px;top:432px" width="11" height="11" viewBox="0 0 11 11"><rect x="2.6" y="2.45" width="5.6" height="5.7" fill="#000" stroke="none" stroke-width="0.6"/></svg>
<div class="t" style="left:852px;top:432.30px;line-height:10px;font-size:5.8px;color:#1a1a1a;">Durchgehend</div>
<svg style="position:absolute;left:889.8px;top:433.70px" width="7.2" height="7.2" viewBox="0 0 7.2 7.2"><path d="M3.6 0.7L6.5 3.6L3.6 6.5L0.7 3.6Z" fill="#000" stroke="#000" stroke-width="0.45"/></svg>
<div class="t" style="left:899px;top:432.30px;line-height:10px;font-size:5.8px;color:#1a1a1a;">0.5</div>
<div class="t" style="left:687.0999999999999px;top:441.50px;line-height:10px;font-size:5.8px;color:#1a1a1a;">Kurven</div>
<svg style="position:absolute;left:788.05px;top:443.20px" width="4.9" height="6.2" viewBox="0 0 6 7.6"><path d="M3 0.5C1.5 0.5 0.7 1.5 0.7 2.6C0.7 3.6 1.6 4.2 1.9 5H4.1C4.4 4.2 5.3 3.6 5.3 2.6C5.3 1.5 4.5 0.5 3 0.5Z" fill="#fdf7a0" stroke="#5f5a18" stroke-width="0.75"/><path d="M2 5.8H4M2.2 6.8H3.8" stroke="#444" stroke-width="0.7"/></svg>
<svg style="position:absolute;left:796.40px;top:443.00px" width="6.2" height="6.7" viewBox="0 0 7 7.6"><path d="M3.6 3.6V2C3.6 0.2 6.3 0.2 6.3 2V2.6" fill="none" stroke="#555" stroke-width="0.7"/><rect x="0.6" y="3.5" width="4.6" height="3.5" fill="#f2e24a" stroke="#6a6210" stroke-width="0.55"/></svg>
<svg style="position:absolute;left:802px;top:441px" width="11" height="11" viewBox="0 0 11 11"><rect x="2.6" y="2.65" width="5.6" height="5.7" fill="#000" stroke="none" stroke-width="0.6"/></svg>
<div class="t" style="left:852px;top:441.50px;line-height:10px;font-size:5.8px;color:#1a1a1a;">Durchgehend</div>
<svg style="position:absolute;left:889.8px;top:442.90px" width="7.2" height="7.2" viewBox="0 0 7.2 7.2"><path d="M3.6 0.7L6.5 3.6L3.6 6.5L0.7 3.6Z" fill="#000" stroke="#000" stroke-width="0.45"/></svg>
<div class="t" style="left:899px;top:441.50px;line-height:10px;font-size:5.8px;color:#1a1a1a;">Standard</div>
<div class="t" style="left:687.0999999999999px;top:450.70px;line-height:10px;font-size:5.8px;color:#1a1a1a;">Szenensilhouettenkurven</div>
<svg style="position:absolute;left:788.05px;top:452.40px" width="4.9" height="6.2" viewBox="0 0 6 7.6"><path d="M3 0.5C1.5 0.5 0.7 1.5 0.7 2.6C0.7 3.6 1.6 4.2 1.9 5H4.1C4.4 4.2 5.3 3.6 5.3 2.6C5.3 1.5 4.5 0.5 3 0.5Z" fill="#fdf7a0" stroke="#5f5a18" stroke-width="0.75"/><path d="M2 5.8H4M2.2 6.8H3.8" stroke="#444" stroke-width="0.7"/></svg>
<svg style="position:absolute;left:796.40px;top:452.20px" width="6.2" height="6.7" viewBox="0 0 7 7.6"><path d="M3.6 3.6V2C3.6 0.2 6.3 0.2 6.3 2V2.6" fill="none" stroke="#555" stroke-width="0.7"/><rect x="0.6" y="3.5" width="4.6" height="3.5" fill="#f2e24a" stroke="#6a6210" stroke-width="0.55"/></svg>
<svg style="position:absolute;left:802px;top:450px" width="11" height="11" viewBox="0 0 11 11"><rect x="2.6" y="2.85" width="5.6" height="5.7" fill="#000" stroke="none" stroke-width="0.6"/></svg>
<div class="t" style="left:852px;top:450.70px;line-height:10px;font-size:5.8px;color:#1a1a1a;">Durchgehend</div>
<svg style="position:absolute;left:889.8px;top:452.10px" width="7.2" height="7.2" viewBox="0 0 7.2 7.2"><path d="M3.6 0.7L6.5 3.6L3.6 6.5L0.7 3.6Z" fill="#000" stroke="#000" stroke-width="0.45"/></svg>
<div class="t" style="left:899px;top:450.70px;line-height:10px;font-size:5.8px;color:#1a1a1a;">0.5</div>
<div style="left:928.3px;top:87px;width:1.7px;height:384px;background:#f0f0f0;"></div>
<div style="left:660px;top:470.8px;width:270px;height:8.6px;background:#f0f0f0;"></div>
<div style="left:668.7px;top:471.4px;width:198px;height:7.4px;background:#cdcdcd;"></div>
<svg style="position:absolute;left:661px;top:472px" width="6" height="6" viewBox="0 0 6 6"><path d="M4 0.8L1.8 3L4 5.2" fill="none" stroke="#555" stroke-width="0.8"/></svg>
<svg style="position:absolute;left:921px;top:472px" width="6" height="6" viewBox="0 0 6 6"><path d="M2 0.8L4.2 3L2 5.2" fill="none" stroke="#555" stroke-width="0.8"/></svg>
<div style="left:3.9999999999999996px;top:485.3px;width:7px;height:7px;background:#fff;border:0.55px solid #4a4a4a;"></div>
<svg style="position:absolute;left:3.9999999999999996px;top:485.3px" width="7" height="7" viewBox="0 0 7 7"><path d="M1.5 3.6L3 5.2L5.6 1.8" fill="none" stroke="#222" stroke-width="0.6"/></svg>
<div class="t" style="left:11.9px;top:484.00px;line-height:10px;font-size:5.8px;color:#222;">End</div>
<div style="left:24.9px;top:485.3px;width:7px;height:7px;background:#fff;border:0.55px solid #4a4a4a;"></div>
<svg style="position:absolute;left:24.9px;top:485.3px" width="7" height="7" viewBox="0 0 7 7"><path d="M1.5 3.6L3 5.2L5.6 1.8" fill="none" stroke="#222" stroke-width="0.6"/></svg>
<div class="t" style="left:32.5px;top:484.00px;line-height:10px;font-size:5.8px;color:#222;">Nächst</div>
<div style="left:53.4px;top:485.3px;width:7px;height:7px;background:#fff;border:0.55px solid #4a4a4a;"></div>
<svg style="position:absolute;left:53.4px;top:485.3px" width="7" height="7" viewBox="0 0 7 7"><path d="M1.5 3.6L3 5.2L5.6 1.8" fill="none" stroke="#222" stroke-width="0.6"/></svg>
<div class="t" style="left:61.6px;top:484.00px;line-height:10px;font-size:5.8px;color:#222;">Punkt</div>
<div style="left:80.4px;top:485.3px;width:7px;height:7px;background:#fff;border:0.55px solid #4a4a4a;"></div>
<svg style="position:absolute;left:80.4px;top:485.3px" width="7" height="7" viewBox="0 0 7 7"><path d="M1.5 3.6L3 5.2L5.6 1.8" fill="none" stroke="#222" stroke-width="0.6"/></svg>
<div class="t" style="left:87.5px;top:484.00px;line-height:10px;font-size:5.8px;color:#222;">Mitte</div>
<div style="left:105.10000000000001px;top:485.3px;width:7px;height:7px;background:#fff;border:0.55px solid #4a4a4a;"></div>
<div class="t" style="left:112.3px;top:484.00px;line-height:10px;font-size:5.8px;color:#222;">Zen</div>
<div style="left:125.4px;top:485.3px;width:7px;height:7px;background:#fff;border:0.55px solid #4a4a4a;"></div>
<div class="t" style="left:133.3px;top:484.00px;line-height:10px;font-size:5.8px;color:#222;">Sch</div>
<div style="left:145.9px;top:485.3px;width:7px;height:7px;background:#fff;border:0.55px solid #4a4a4a;"></div>
<svg style="position:absolute;left:145.9px;top:485.3px" width="7" height="7" viewBox="0 0 7 7"><path d="M1.5 3.6L3 5.2L5.6 1.8" fill="none" stroke="#222" stroke-width="0.6"/></svg>
<div class="t" style="left:153.2px;top:484.00px;line-height:10px;font-size:5.8px;color:#222;">Lot</div>
<div style="left:165.4px;top:485.3px;width:7px;height:7px;background:#fff;border:0.55px solid #4a4a4a;"></div>
<div class="t" style="left:172.7px;top:484.00px;line-height:10px;font-size:5.8px;color:#222;">Tan</div>
<div style="left:186.4px;top:485.3px;width:7px;height:7px;background:#fff;border:0.55px solid #4a4a4a;"></div>
<div class="t" style="left:193.3px;top:484.00px;line-height:10px;font-size:5.8px;color:#222;">Quad</div>
<div style="left:211.6px;top:485.3px;width:7px;height:7px;background:#fff;border:0.55px solid #4a4a4a;"></div>
<div class="t" style="left:218.5px;top:484.00px;line-height:10px;font-size:5.8px;color:#222;">Knoten</div>
<div style="left:240.0px;top:485.3px;width:7px;height:7px;background:#fff;border:0.55px solid #4a4a4a;"></div>
<div class="t" style="left:247.9px;top:484.00px;line-height:10px;font-size:5.8px;color:#222;">Scheitelpunkt</div>
<div style="left:286.79999999999995px;top:485.3px;width:7px;height:7px;background:#f4f4f4;border:0.55px solid #c4c4c4;"></div>
<div class="t" style="left:294.0px;top:484.00px;line-height:10px;font-size:5.8px;color:#222;">Projektion</div>
<div style="left:323.4px;top:485.3px;width:7px;height:7px;background:#f4f4f4;border:0.55px solid #c4c4c4;"></div>
<div class="t" style="left:331.3px;top:484.00px;line-height:10px;font-size:5.8px;color:#222;">Deaktivieren</div>
<div style="left:0px;top:494.2px;width:930px;height:9.4px;background:#f4f5f6;border-top:0.6px solid #dadada;"></div>
<div style="left:67.5px;top:495.2px;width:0.6px;height:8px;background:#d4d4d4;"></div>
<div style="left:110px;top:495.2px;width:0.6px;height:8px;background:#d4d4d4;"></div>
<div style="left:152.5px;top:495.2px;width:0.6px;height:8px;background:#d4d4d4;"></div>
<div style="left:195px;top:495.2px;width:0.6px;height:8px;background:#d4d4d4;"></div>
<div style="left:276.3px;top:495.2px;width:0.6px;height:8px;background:#d4d4d4;"></div>
<div style="left:311.3px;top:495.2px;width:0.6px;height:8px;background:#d4d4d4;"></div>
<div style="left:332.8px;top:495.2px;width:0.6px;height:8px;background:#d4d4d4;"></div>
<div style="left:355.6px;top:495.2px;width:0.6px;height:8px;background:#d4d4d4;"></div>
<div style="left:378.5px;top:495.2px;width:0.6px;height:8px;background:#d4d4d4;"></div>
<div style="left:413.7px;top:495.2px;width:0.6px;height:8px;background:#d4d4d4;"></div>
<div style="left:442.4px;top:495.2px;width:0.6px;height:8px;background:#d4d4d4;"></div>
<div style="left:499.7px;top:495.2px;width:0.6px;height:8px;background:#d4d4d4;"></div>
<div class="t" style="left:6.4px;top:494.20px;line-height:10px;font-size:5.8px;color:#111;font-weight:bold;">Welt</div>
<div class="t" style="left:34.4px;top:494.20px;line-height:10px;font-size:5.8px;color:#222;">x 220.946</div>
<div class="t" style="left:78.8px;top:494.20px;line-height:10px;font-size:5.8px;color:#222;">y 38.403</div>
<div class="t" style="left:122.4px;top:494.20px;line-height:10px;font-size:5.8px;color:#222;">z 0.000</div>
<div class="t" style="left:161.5px;top:494.20px;line-height:10px;font-size:5.8px;color:#222;">Millimeter</div>
<div class="t" style="left:205.6px;top:494.20px;line-height:10px;font-size:5.8px;color:#222;">Fassade</div>
<div class="t" style="left:280.3px;top:494.20px;line-height:10px;font-size:5.8px;color:#222;">Rasterfang</div>
<div class="t" style="left:314.4px;top:494.20px;line-height:10px;font-size:5.8px;color:#222;">Ortho</div>
<div class="t" style="left:336.4px;top:494.20px;line-height:10px;font-size:5.8px;color:#222;">Planar</div>
<div class="t" style="left:446px;top:494.20px;line-height:10px;font-size:5.8px;color:#222;">Historie aufnehmen</div>
<div class="t" style="left:503.2px;top:494.20px;line-height:10px;font-size:5.8px;color:#222;">Filter</div>
<div class="t" style="left:519.9px;top:494.20px;line-height:10px;font-size:5.8px;color:#222;">Minuten seit letzter Speicherung: 4</div>
<div class="t" style="left:358.4px;top:494.20px;line-height:10px;font-size:5.8px;color:#111;font-weight:bold;">Ofang</div>
<div class="t" style="left:380.4px;top:494.20px;line-height:10px;font-size:5.8px;color:#111;font-weight:bold;">SmartTrack</div>
<div class="t" style="left:416.2px;top:494.20px;line-height:10px;font-size:5.8px;color:#111;font-weight:bold;">Gumball</div>
<div style="left:197.3px;top:496px;width:6.6px;height:6.6px;background:#000;"></div>
<div style="left:926.6px;top:494.5px;width:0.6px;height:9px;background:#bbb;"></div>
<div style="left:0px;top:503.6px;width:930px;height:19.4px;background:#1c2b34;"></div>
<div style="left:190.4px;top:503.6px;width:24px;height:19.4px;background:#3d4a53;"></div>
<svg style="position:absolute;left:5.60px;top:507.60px" width="11.6" height="11.6" viewBox="0 0 13 13"><path d="M2.2 3.6L6 3.1V6.3H2.2ZM6.6 3L10.8 2.4V6.3H6.6ZM2.2 6.9H6V10.1L2.2 9.6ZM6.6 6.9H10.8V10.8L6.6 10.2Z" fill="#fff"/></svg>
<svg style="position:absolute;left:29.70px;top:507.60px" width="11.6" height="11.6" viewBox="0 0 13 13"><path d="M1 3H5L6 4H12V10.5H1Z" fill="#e8b82c"/><path d="M1 5.4H12V10.5H1Z" fill="#f6d662"/><rect x="3" y="6.6" width="7" height="2.6" fill="#5aa0e0"/></svg>
<svg style="position:absolute;left:54.50px;top:507.60px" width="11.6" height="11.6" viewBox="0 0 13 13"><circle cx="6.5" cy="6.5" r="5.4" fill="#e8602a"/><circle cx="6.8" cy="6.8" r="3" fill="#5a3ad0"/><path d="M1.4 5C2 2 5 0.8 8 1.6C5.5 2 4.5 3.5 5 5C3.5 5 3 7 4 8.5C5.5 10.5 9 10 10.4 7.6C10.6 10.5 8 12 6.5 11.9C3 11.9 0.6 8.6 1.4 5Z" fill="#f8a820"/></svg>
<svg style="position:absolute;left:78.20px;top:507.60px" width="11.6" height="11.6" viewBox="0 0 13 13"><rect x="1" y="1" width="11" height="11" fill="#3ec23a"/><path d="M9.4 4.2C8 2.4 3.4 3 3.4 6.5C3.4 10 8 10.6 9.4 8.8" fill="none" stroke="#fff" stroke-width="1.5"/></svg>
<svg style="position:absolute;left:101.70px;top:507.60px" width="11.6" height="11.6" viewBox="0 0 13 13"><rect x="1" y="1" width="11" height="11" fill="#2a0a0a" stroke="#8a1a14" stroke-width="0.6"/><path d="M3 10C5 8 6.5 5 6.4 3C6.3 2 5.4 2.2 5.6 3.4C6 6 8 8 10.4 8.4C9 7.6 5 8.6 3 10Z" fill="none" stroke="#f0482c" stroke-width="0.8"/></svg>
<svg style="position:absolute;left:125.50px;top:507.60px" width="11.6" height="11.6" viewBox="0 0 13 13"><rect x="1" y="1" width="11" height="11" fill="#3a0a28" stroke="#e8358a" stroke-width="0.7"/><text x="3" y="9.4" font-size="6.4" font-weight="bold" font-family="Liberation Sans,sans-serif" fill="#f0509c">Id</text></svg>
<svg style="position:absolute;left:148.60px;top:507.60px" width="11.6" height="11.6" viewBox="0 0 13 13"><path d="M2.5 9.5L8 3.5L10.5 6L5 11Z" fill="#5ac83a"/><circle cx="5.2" cy="4.6" r="2.6" fill="#9adc6a"/><path d="M7 7L11.5 11.5" stroke="#3a8a2a" stroke-width="1.2"/></svg>
<svg style="position:absolute;left:172.70px;top:507.60px" width="11.6" height="11.6" viewBox="0 0 13 13"><rect x="1" y="2.2" width="11" height="8.6" fill="#2a8ad8"/><rect x="2" y="3.4" width="5" height="6.2" fill="#9ad0f4"/><path d="M8 4.4H11M8 6.4H11M8 8.4H11" stroke="#d8ecfa" stroke-width="0.8"/></svg>
<svg style="position:absolute;left:196.50px;top:507.60px" width="11.6" height="11.6" viewBox="0 0 13 13"><path d="M1.5 11.5C1.5 6 2.5 3 5 2.5L5.5 0.8L7 2.6C9.5 3 11.5 5 11.8 8L10.5 9.5L9 8.5C7.5 8.6 6.5 9.8 6.5 11.5Z" fill="#161616" stroke="#f0f0f0" stroke-width="0.7"/><path d="M3 11.5C3.4 8 4.6 6 6.4 5.6M7.2 6C8 7 9 7.4 10 7.2" fill="none" stroke="#f0f0f0" stroke-width="0.7"/><circle cx="7.6" cy="4.6" r="0.7" fill="#fff"/></svg>
<svg style="position:absolute;left:220.20px;top:507.60px" width="11.6" height="11.6" viewBox="0 0 13 13"><rect x="1" y="1" width="11" height="11" rx="1.4" fill="#e84a2e"/><path d="M9.4 4.2C8 2.4 3.4 3 3.4 6.5C3.4 10 8 10.6 9.4 8.8" fill="none" stroke="#fff" stroke-width="1.5"/></svg>
<div style="left:26.0px;top:522px;width:19px;height:1px;background:#7fb6e0;"></div>
<div style="left:50.8px;top:522px;width:19px;height:1px;background:#7fb6e0;"></div>
<div style="left:74.5px;top:522px;width:19px;height:1px;background:#7fb6e0;"></div>
<div style="left:98.0px;top:522px;width:19px;height:1px;background:#7fb6e0;"></div>
<div style="left:121.80000000000001px;top:522px;width:19px;height:1px;background:#7fb6e0;"></div>
<div style="left:144.9px;top:522px;width:19px;height:1px;background:#7fb6e0;"></div>
<div style="left:169.0px;top:522px;width:19px;height:1px;background:#7fb6e0;"></div>
<div style="left:216.5px;top:522px;width:19px;height:1px;background:#7fb6e0;"></div>
<div style="left:190.4px;top:522px;width:24px;height:1px;background:#9ccaf0;"></div>
<div style="left:926.8px;top:503.6px;width:0.5px;height:19.4px;background:#4a5a64;"></div>
<svg style="position:absolute;left:798px;top:509px" width="9" height="8" viewBox="0 0 9 8"><path d="M1.4 5.6L4.5 2.4L7.6 5.6" fill="none" stroke="#fff" stroke-width="0.9"/></svg>
<svg style="position:absolute;left:810.6px;top:508.6px" width="6.8" height="9.4" viewBox="0 0 8 11"><rect x="2.4" y="0.6" width="3.2" height="6" rx="1.6" fill="#fff"/><path d="M1 5C1 9 7 9 7 5M4 8V10M2.4 10.2H5.6" fill="none" stroke="#fff" stroke-width="0.7"/></svg>
<svg style="position:absolute;left:821px;top:510.4px" width="9.6" height="6.1" viewBox="0 0 11 7"><rect x="1.8" y="1" width="8.4" height="4.8" fill="none" stroke="#fff" stroke-width="0.8"/><rect x="2.8" y="2" width="5" height="2.8" fill="#fff"/><rect x="0.4" y="2.4" width="1.2" height="2" fill="#fff"/></svg>
<svg style="position:absolute;left:833.6px;top:509.4px" width="8.6" height="8.6" viewBox="0 0 10 10"><path d="M1.5 9A7 7 0 0 1 8.5 2M3.2 9A5.2 5.2 0 0 1 8.5 3.8M5 9A3.5 3.5 0 0 1 8.5 5.6" fill="none" stroke="#fff" stroke-width="0.7"/><path d="M6.6 9L8.6 7V9Z" fill="#fff"/></svg>
<svg style="position:absolute;left:844px;top:509.2px" width="9.6" height="8.7" viewBox="0 0 11 10"><path d="M1 3.8H2.8L5 1.8V8.2L2.8 6.2H1Z" fill="none" stroke="#fff" stroke-width="0.7"/><path d="M6.4 3.4C7.2 4.2 7.2 5.8 6.4 6.6M7.8 2.2C9.4 3.8 9.4 6.2 7.8 7.8" fill="none" stroke="#fff" stroke-width="0.7"/></svg>
<div class="t" style="left:858.3px;top:508.40px;line-height:10px;font-size:5.6px;color:#fff;letter-spacing:-0.375px;">DEU</div>
<div class="t" style="left:881.5px;top:503.50px;line-height:10px;font-size:5.6px;color:#fff;letter-spacing:0.097px;">20:28</div>
<div class="t" style="left:875.4px;top:511.60px;line-height:10px;font-size:5.6px;color:#fff;letter-spacing:-0.183px;">05.09.2019</div>
<svg style="position:absolute;left:908px;top:507px" width="13" height="13" viewBox="0 0 13 13"><path d="M1.5 1.5H10.5V8H5L3 10V8H1.5Z" fill="#fff"/><path d="M3 3.4H9M3 5H9M3 6.4H7" stroke="#1c2b34" stroke-width="0.5"/><circle cx="9.4" cy="9" r="3" fill="#1c2b34" stroke="#fff" stroke-width="0.6"/><text x="8" y="10.8" font-size="4.8" font-family="Liberation Sans,sans-serif" fill="#fff">4</text></svg>
</div></body></html>
